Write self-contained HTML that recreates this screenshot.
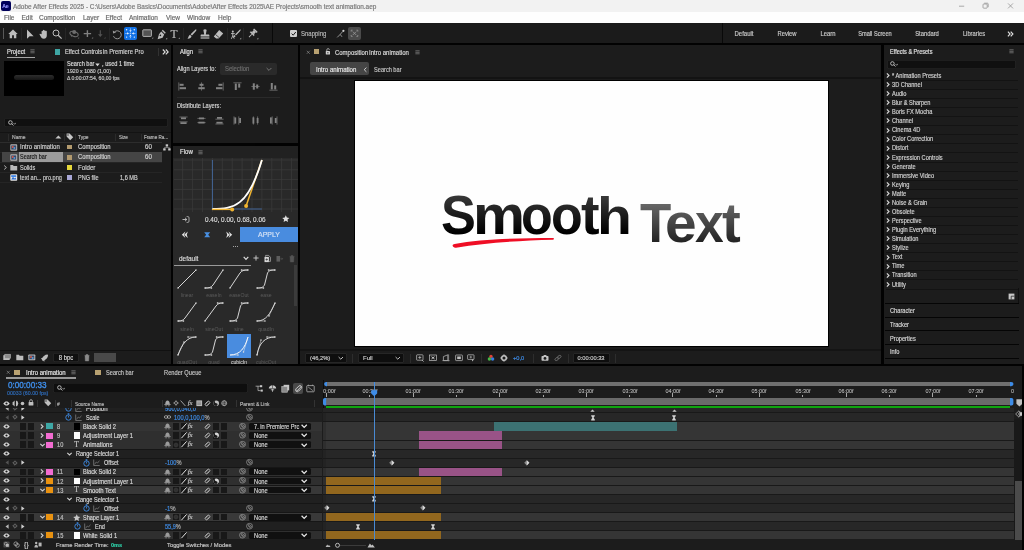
<!DOCTYPE html>
<html><head><meta charset="utf-8"><title>Adobe After Effects 2025</title>
<style>
html,body{margin:0;padding:0;background:#030303;}
body{width:1024px;height:550px;overflow:hidden;position:relative;font-family:"Liberation Sans",sans-serif;}
#app{position:absolute;left:0;top:0;width:1024px;height:550px;overflow:hidden;background:#030303;will-change:transform;opacity:0.9999;}
#app div,#app span,#app svg{position:absolute;}
#app span{white-space:nowrap;line-height:12px;height:12px;-webkit-text-stroke:0.18px currentColor;}
#app svg{overflow:visible;}
</style></head><body><div id="app">
<div style="left:0px;top:0px;width:1024px;height:12px;background:#f3f3f3;"></div>
<div style="left:1px;top:1px;width:10px;height:10px;background:#00005b;border-radius:2px;"></div>
<span style="left:2.2px;top:0.2px;font-size:5.2px;color:#9999ff;font-weight:bold;letter-spacing:-0.2px;">Ae</span>
<span style="left:13px;top:0.5px;font-size:6.45px;color:#7a7a7a;">Adobe After Effects 2025 - C:\Users\Adobe Basics\Documents\Adobe\After Effects 2025\AE Projects\smooth text animation.aep</span>
<svg style="left:956px;top:2px;" width="60" height="8" viewBox="0 0 60 8"><path d="M3 4.2h5.2" stroke="#8a8a8a" stroke-width="0.7" fill="none"/><rect x="27" y="2" width="4.2" height="4.2" rx="0.8" stroke="#8a8a8a" stroke-width="0.7" fill="none"/><path d="M28.2 1.2h3.2a0.8 0.8 0 0 1 .8 .8v3.2" stroke="#8a8a8a" stroke-width="0.7" fill="none"/><path d="M52 1.4l5 5M57 1.4l-5 5" stroke="#8a8a8a" stroke-width="0.7" fill="none"/></svg>
<div style="left:0px;top:12px;width:1024px;height:11px;background:#ffffff;"></div>
<span style="left:4px;top:11.6px;font-size:6.5px;color:#6a6a6a;">File</span>
<span style="left:21.5px;top:11.6px;font-size:6.5px;color:#6a6a6a;">Edit</span>
<span style="left:39px;top:11.6px;font-size:6.5px;color:#6a6a6a;">Composition</span>
<span style="left:83px;top:11.6px;font-size:6.5px;color:#6a6a6a;">Layer</span>
<span style="left:105.5px;top:11.6px;font-size:6.5px;color:#6a6a6a;">Effect</span>
<span style="left:129px;top:11.6px;font-size:6.5px;color:#6a6a6a;">Animation</span>
<span style="left:166px;top:11.6px;font-size:6.5px;color:#6a6a6a;">View</span>
<span style="left:187px;top:11.6px;font-size:6.5px;color:#6a6a6a;">Window</span>
<span style="left:218px;top:11.6px;font-size:6.5px;color:#6a6a6a;">Help</span>
<div style="left:0px;top:23px;width:1024px;height:20.2px;background:#1c1c1c;"></div>
<div style="left:3px;top:28px;width:1px;height:11px;background:#5a5a5a;"></div>
<div style="left:21px;top:27.5px;width:0.8px;height:12px;background:#272727;"></div>
<div style="left:65px;top:27.5px;width:0.8px;height:12px;background:#272727;"></div>
<div style="left:108.5px;top:27.5px;width:0.8px;height:12px;background:#272727;"></div>
<div style="left:182.5px;top:27.5px;width:0.8px;height:12px;background:#272727;"></div>
<div style="left:227px;top:27.5px;width:0.8px;height:12px;background:#272727;"></div>
<div style="left:243px;top:27.5px;width:0.8px;height:12px;background:#272727;"></div>
<div style="left:272px;top:23px;width:1px;height:19.8px;background:#0a0a0a;"></div>
<div style="left:722px;top:23px;width:1px;height:19.8px;background:#0a0a0a;"></div>
<svg style="left:8px;top:29px;" width="10" height="10" viewBox="0 0 10 10"><path d="M5 0.6L0.3 5h1.4v4.2h2.4V6.2h1.8v3h2.4V5h1.4z" fill="#bdbdbd"/></svg>
<svg style="left:26px;top:28.5px;" width="9" height="11" viewBox="0 0 9 11"><path d="M1 0.5v9.2l2.6-2.4h4z" fill="#bdbdbd"/></svg>
<svg style="left:38.5px;top:28.5px;" width="10" height="11" viewBox="0 0 10 11"><path d="M2.6 5.2V2.2a.7.7 0 0 1 1.3 0V1.3a.7.7 0 0 1 1.3 0v.4a.7.7 0 0 1 1.3 0v.8a.65.65 0 0 1 1.3 0V6.6c0 2-1 3.2-3 3.2-1.6 0-2.3-.7-3.1-2.2L.6 5.6c-.3-.7.5-1.1 1-.6z" fill="#bdbdbd"/></svg>
<svg style="left:51.5px;top:28.5px;" width="11" height="11" viewBox="0 0 11 11"><circle cx="4" cy="4" r="3" fill="none" stroke="#bdbdbd" stroke-width="1"/><path d="M6.2 6.2l3.4 3.4" stroke="#bdbdbd" stroke-width="1.3"/></svg>
<svg style="left:68.5px;top:29px;" width="11" height="10" viewBox="0 0 11 10"><circle cx="5.200" cy="2.900" r="2" fill="#6e6e6e"/><ellipse cx="5" cy="5" rx="4.300" ry="2.300" transform="rotate(18 5 5)" fill="none" stroke="#6e6e6e" stroke-width="1.100"/><path d="M1.600 6.600l1.800-.2-.6 1.600z" fill="#6e6e6e"/><path d="M8.600 9.400h1.500v-1.500z" fill="#6e6e6e"/></svg>
<svg style="left:82.5px;top:29px;" width="11" height="10" viewBox="0 0 11 10"><path d="M4.400 1.200v6.800M0.700 4.600h7.400" stroke="#828282" stroke-width="1.400"/><path d="M8.600 9.400h1.500v-1.500z" fill="#828282"/></svg>
<svg style="left:96px;top:29px;" width="10" height="10" viewBox="0 0 10 10"><path d="M4.300 1.200v5" stroke="#555" stroke-width="1.100" fill="none"/><path d="M2 5.200h4.600L4.300 8z" fill="#555"/><path d="M8 9.400h1.500v-1.500z" fill="#555"/></svg>
<svg style="left:112px;top:28.5px;" width="11" height="11" viewBox="0 0 11 11"><path d="M2.600 2.800A4 4 0 1 1 1.500 7.200" stroke="#9a9a9a" stroke-width="1" fill="none"/><path d="M0.800 1.400l0.300 3.200 3-1z" fill="#9a9a9a"/></svg>
<div style="left:124.2px;top:27px;width:12.9px;height:12.7px;background:#1473e6;border-radius:2px;"></div>
<svg style="left:124.2px;top:27px;" width="12.9" height="12.7" viewBox="0 0 12.9 12.7"><g fill="#fff"><circle cx="6.450" cy="6.400" r="0.800" fill="#9cc4f5"/><path d="M5.300 3.200h2.300L6.450 5.100z"/><path d="M5.300 9.600h2.300L6.450 7.700z"/><path d="M3.100 5.250v2.300L5 6.400z"/><path d="M9.800 5.250v2.300L7.900 6.400z"/><circle cx="2.600" cy="2.700" r="0.700"/><circle cx="10.300" cy="2.700" r="0.700"/><circle cx="2.600" cy="10.100" r="0.700"/><circle cx="10.300" cy="10.100" r="0.700"/><circle cx="6.450" cy="2" r="0.500"/><circle cx="6.450" cy="10.800" r="0.500"/><circle cx="2" cy="6.400" r="0.500"/><circle cx="10.900" cy="6.400" r="0.500"/></g></svg>
<svg style="left:142px;top:29px;" width="12" height="10" viewBox="0 0 12 10"><rect x="0.8" y="0.8" width="8.6" height="6.6" rx="0.6" fill="#555" stroke="#bdbdbd" stroke-width="0.9"/><path d="M9.8 9.6h1.4v-1.4z" fill="#bdbdbd"/></svg>
<svg style="left:155.5px;top:28.5px;" width="12" height="11" viewBox="0 0 12 11"><path d="M6.8 0.8l3 3-1 1-3-3zM5.2 2.6l3 3-1.6 3.2-5 1.4 1.4-5z" fill="#bdbdbd"/><circle cx="4.4" cy="6.4" r="0.8" fill="#1b1b1b"/><path d="M9.8 10.2h1.4v-1.4z" fill="#bdbdbd"/></svg>
<span style="left:170.5px;top:27.6px;font-size:11.5px;color:#bdbdbd;font-family:Liberation Serif,serif;">T</span>
<svg style="left:178px;top:37px;" width="2" height="2" viewBox="0 0 2 2"><path d="M0.4 1.8h1.4v-1.4z" fill="#bdbdbd"/></svg>
<svg style="left:186.5px;top:28.5px;" width="10" height="11" viewBox="0 0 10 11"><path d="M9.2 0.4c.4.4 .2 1-.2 1.5L5 6.6 3.6 5.2 8 1c.4-.4.9-.8 1.2-.6z" fill="#bdbdbd"/><path d="M3 5.8l1.5 1.5c-.3 1.6-2 2.6-4 2.4C1.6 8.600 1.500 6.400 3 5.8z" fill="#bdbdbd"/></svg>
<svg style="left:199.5px;top:28.5px;" width="10" height="11" viewBox="0 0 10 11"><path d="M3.600 2.200a1.500 1.500 0 1 1 2.800 0L5.800 5.400h2.600c.6 0 1 .4 1 1v1.200H.6V6.400c0-.6.4-1 1-1h2.600z" fill="#bdbdbd"/><rect x="0.6" y="8.4" width="8.8" height="1.2" fill="#bdbdbd"/></svg>
<svg style="left:213px;top:28.5px;" width="11" height="11" viewBox="0 0 11 11"><path d="M6.200 1l4 3.400-4.600 5.200H3.200L.8 7.400z" fill="#bdbdbd"/><path d="M2.600 5.600l3.600 3" stroke="#1b1b1b" stroke-width="0.7"/></svg>
<svg style="left:230px;top:28.5px;" width="12" height="11" viewBox="0 0 12 11"><circle cx="2.800" cy="2.400" r="1" fill="#bdbdbd"/><path d="M1 4.600h3.800M2.800 3.600v3.200M2.800 6.600L1.400 9.800M2.800 6.600l1.400 3" stroke="#bdbdbd" stroke-width="0.9" fill="none"/><path d="M10.600 0.600c.4.400-.2 1.200-.6 1.600L6.200 6.200 5 5.400 9 1.400c.6-.6 1.200-1 1.600-.8zM4.600 6l1 1c-.4 1-1.400 1.600-2.600 1.400.8-.6.600-1.800 1.600-2.400z" fill="#bdbdbd"/><path d="M9.800 10.200h1.400v-1.400z" fill="#bdbdbd"/></svg>
<svg style="left:246.5px;top:28.5px;" width="12" height="11" viewBox="0 0 12 11"><g transform="rotate(45 5.200 4.800)" fill="#bdbdbd"><rect x="2.700" y="-0.400" width="5" height="1.500" rx="0.400"/><rect x="3.700" y="1" width="3" height="2.600"/><path d="M2.200 5.400c0-1.200 1-2 3-2s3 .8 3 2z"/><rect x="4.800" y="5.400" width="0.900" height="4" /></g><path d="M9.800 10.200h1.500v-1.500z" fill="#bdbdbd"/></svg>
<div style="left:289.8px;top:30.2px;width:7.2px;height:7px;background:#d0d0d0;border-radius:1px;"></div>
<svg style="left:289.8px;top:30.2px;" width="7.2" height="7" viewBox="0 0 7.2 7"><path d="M1.600 3.600l1.600 1.600 2.600-3.200" stroke="#1b1b1b" stroke-width="1" fill="none"/></svg>
<span style="left:301px;top:28.3px;font-size:6.93px;color:#b8b8b8;transform:scaleX(0.8645);transform-origin:0 50%;">Snapping</span>
<svg style="left:335.5px;top:29px;" width="10" height="10" viewBox="0 0 10 10"><path d="M1.200 8.400l3-3 1.800 2.400M4.200 5.400l2.600-3" stroke="#b0b0b0" stroke-width="0.8" fill="none"/><circle cx="7.400" cy="1.800" r="1.100" fill="#d0d0d0"/></svg>
<div style="left:347.5px;top:27.2px;width:13px;height:12.6px;background:#4b4b4b;border-radius:2px;"></div>
<svg style="left:347.5px;top:27.2px;" width="13" height="12.6" viewBox="0 0 13 12.6"><g stroke="#9a9a9a" stroke-width="0.8" fill="none"><path d="M3.200 4.600V3.200h1.400M8.400 3.200h1.400v1.400M9.800 8v1.400H8.400M4.600 9.400H3.200V8"/><path d="M4.800 4.600l3.400 3.400M8.200 4.600L4.800 8"/></g></svg>
<span style="left:644.3px;width:200px;text-align:center;top:28.2px;font-size:6.4px;color:#c8c8c8;transform:scaleX(0.9383);">Default</span>
<span style="left:687px;width:200px;text-align:center;top:28.2px;font-size:6.4px;color:#c8c8c8;transform:scaleX(0.9061);">Review</span>
<span style="left:727.5px;width:200px;text-align:center;top:28.2px;font-size:6.4px;color:#c8c8c8;transform:scaleX(0.9108);">Learn</span>
<span style="left:775.3px;width:200px;text-align:center;top:28.2px;font-size:6.4px;color:#c8c8c8;transform:scaleX(0.8812);">Small Screen</span>
<span style="left:827.3px;width:200px;text-align:center;top:28.2px;font-size:6.4px;color:#c8c8c8;transform:scaleX(0.9137);">Standard</span>
<span style="left:873.7px;width:200px;text-align:center;top:28.2px;font-size:6.4px;color:#c8c8c8;transform:scaleX(0.9055);">Libraries</span>
<svg style="left:1006.6px;top:30.8px;" width="7" height="6" viewBox="0 0 7 6"><path d="M0.900 0.700l2.200 2.300L0.900 5.300M3.700 0.700l2.200 2.300-2.200 2.300" stroke="#e0e0e0" stroke-width="1.150" fill="none"/></svg>
<div style="left:0px;top:44.6px;width:171.3px;height:319.2px;background:#1d1d1d;"></div>
<span style="left:7px;top:45.9px;font-size:7.26px;color:#e4e4e4;transform:scaleX(0.8061);transform-origin:0 50%;">Project</span>
<svg style="left:30px;top:49.4px;" width="5" height="5" viewBox="0 0 5 5"><path d="M0.400 0.800h4.200M0.400 2.300h4.200M0.400 3.800h4.200" stroke="#8a8a8a" stroke-width="0.7"/></svg>
<div style="left:6.5px;top:56.7px;width:28.5px;height:1.1px;background:#a8a8a8;"></div>
<div style="left:54.5px;top:48.8px;width:5.6px;height:5.8px;background:#3fa7a5;"></div>
<span style="left:65px;top:46.3px;font-size:6.93px;color:#d4d4d4;transform:scaleX(0.8215);transform-origin:0 50%;">Effect Controls</span>
<span style="left:103.2px;top:46.3px;font-size:6.93px;color:#d4d4d4;transform:scaleX(0.8463);transform-origin:0 50%;">in Premiere Pro</span>
<div style="left:158px;top:48px;width:0.8px;height:8px;background:#333;"></div>
<svg style="left:162px;top:48.7px;" width="7" height="6" viewBox="0 0 7 6"><path d="M0.800 0.500l2.300 2.400L0.800 5.300M3.800 0.500l2.300 2.400-2.300 2.400" stroke="#dcdcdc" stroke-width="1.200" fill="none"/></svg>
<div style="left:3.8px;top:61px;width:60.7px;height:34.7px;background:#000;"></div>
<div style="left:13.5px;top:74.6px;width:40.7px;height:5.6px;background:linear-gradient(#2e2e2e,#161616);border-radius:3px;"></div>
<span style="left:67.4px;top:58.3px;font-size:6.93px;color:#dcdcdc;transform:scaleX(0.8092);transform-origin:0 50%;">Search bar</span>
<svg style="left:95.4px;top:62.5px;" width="5" height="4" viewBox="0 0 5 4"><path d="M0.300 0.600h4.400L2.500 3.200z" fill="#dcdcdc"/></svg>
<span style="left:101.7px;top:58.3px;font-size:6.93px;color:#dcdcdc;transform:scaleX(0.8199);transform-origin:0 50%;">, used 1 time</span>
<span style="left:67.4px;top:64.9px;font-size:5.6px;color:#c8c8c8;transform:scaleX(0.9347);transform-origin:0 50%;">1920 x 1080 (1,00)</span>
<span style="left:67.4px;top:71.8px;font-size:5.6px;color:#c8c8c8;transform:scaleX(0.914);transform-origin:0 50%;">&#916; 0:00:07:54, 60,00 fps</span>
<div style="left:4.4px;top:117.6px;width:163.2px;height:9.4px;background:#111111;border-radius:2px;box-shadow:inset 0 0 0 0.600px #2e2e2e;"></div>
<svg style="left:7.5px;top:119.5px;" width="10" height="6" viewBox="0 0 10 6"><circle cx="2.400" cy="2.500" r="1.800" fill="none" stroke="#cfcfcf" stroke-width="0.850"/><path d="M3.700 3.800l1.700 1.700" stroke="#cfcfcf" stroke-width="0.900"/><path d="M5.600 3.100l1.100 1.100 1.100-1.100" stroke="#cfcfcf" stroke-width="0.750" fill="none"/></svg>
<div style="left:0px;top:131.8px;width:171.4px;height:0.7px;background:#141414;"></div>
<span style="left:12px;top:131px;font-size:5.5px;color:#b8b8b8;transform:scaleX(0.9201);transform-origin:0 50%;">Name</span>
<svg style="left:55px;top:134.8px;" width="7" height="4" viewBox="0 0 7 4"><path d="M0.400 3.600L3.400 0.400l3 3.200z" fill="#c4c4c4"/></svg>
<svg style="left:66px;top:133.2px;" width="8" height="8" viewBox="0 0 8 8"><path d="M0.600 0.600h3l3.600 3.600-3 3L0.600 3.600z" fill="#c8c8c8"/><circle cx="2" cy="2" r="0.700" fill="#1d1d1d"/></svg>
<span style="left:78.2px;top:131px;font-size:5.5px;color:#b8b8b8;transform:scaleX(0.888);transform-origin:0 50%;">Type</span>
<span style="left:118.7px;top:131px;font-size:5.5px;color:#b8b8b8;transform:scaleX(0.8222);transform-origin:0 50%;">Size</span>
<span style="left:144.2px;top:131px;font-size:5.5px;color:#b8b8b8;transform:scaleX(0.8331);transform-origin:0 50%;">Frame Ra...</span>
<div style="left:7.5px;top:133.5px;width:0.6px;height:7px;background:#2c2c2c;"></div>
<div style="left:64px;top:133.5px;width:0.6px;height:7px;background:#2c2c2c;"></div>
<div style="left:75px;top:133.5px;width:0.6px;height:7px;background:#2c2c2c;"></div>
<div style="left:115px;top:133.5px;width:0.6px;height:7px;background:#2c2c2c;"></div>
<div style="left:141px;top:133.5px;width:0.6px;height:7px;background:#2c2c2c;"></div>
<div style="left:0px;top:141.8px;width:162px;height:0.6px;background:#2e2e2e;"></div>
<div style="left:0px;top:152px;width:162px;height:0.5px;background:#262626;"></div>
<span style="left:20px;top:141.3px;font-size:6.82px;color:#d0d0d0;transform:scaleX(0.8829);transform-origin:0 50%;">Intro animation</span>
<div style="left:66.8px;top:144.6px;width:4.8px;height:4.8px;background:#b39b6f;"></div>
<span style="left:78.4px;top:141.3px;font-size:6.82px;color:#d4d4d4;transform:scaleX(0.8607);transform-origin:0 50%;">Composition</span>
<span style="left:144.8px;top:141.3px;font-size:6.82px;color:#d4d4d4;transform:scaleX(0.9105);transform-origin:0 50%;">60</span>
<div style="left:1.5px;top:152.25px;width:160.5px;height:9.8px;background:#464646;"></div>
<div style="left:19px;top:152.25px;width:43.7px;height:9.8px;background:#9d9d9d;"></div>
<div style="left:0px;top:162.15px;width:162px;height:0.5px;background:#262626;"></div>
<span style="left:20px;top:151.45px;font-size:6.82px;color:#1a1a1a;transform:scaleX(0.8011);transform-origin:0 50%;">Search bar</span>
<div style="left:66.8px;top:154.75px;width:4.8px;height:4.8px;background:#b39b6f;"></div>
<span style="left:78.4px;top:151.45px;font-size:6.82px;color:#d4d4d4;transform:scaleX(0.8607);transform-origin:0 50%;">Composition</span>
<span style="left:144.8px;top:151.45px;font-size:6.82px;color:#d4d4d4;transform:scaleX(0.9105);transform-origin:0 50%;">60</span>
<div style="left:0px;top:172.2px;width:162px;height:0.5px;background:#262626;"></div>
<span style="left:20px;top:161.5px;font-size:6.82px;color:#d0d0d0;transform:scaleX(0.8189);transform-origin:0 50%;">Solids</span>
<div style="left:66.8px;top:164.8px;width:4.8px;height:4.8px;background:#e6d83b;"></div>
<span style="left:78.4px;top:161.5px;font-size:6.82px;color:#d4d4d4;transform:scaleX(0.901);transform-origin:0 50%;">Folder</span>
<div style="left:0px;top:182.2px;width:162px;height:0.5px;background:#262626;"></div>
<span style="left:20px;top:171.5px;font-size:6.82px;color:#d0d0d0;transform:scaleX(0.8193);transform-origin:0 50%;">text an... pro.png</span>
<div style="left:66.8px;top:174.8px;width:4.8px;height:4.8px;background:#a9a8d8;"></div>
<span style="left:78.4px;top:171.5px;font-size:6.82px;color:#d4d4d4;transform:scaleX(0.8158);transform-origin:0 50%;">PNG file</span>
<span style="left:119.6px;top:171.5px;font-size:6.82px;color:#d4d4d4;transform:scaleX(0.8197);transform-origin:0 50%;">1,6 MB</span>
<svg style="left:10px;top:143.5px;" width="7.5" height="7" viewBox="0 0 7.5 7"><rect x="0.300" y="0.300" width="6.900" height="6.400" rx="0.800" fill="#b5b5b5"/><rect x="1.200" y="1.400" width="5" height="4.200" fill="#3b4a66"/><circle cx="2.800" cy="3" r="1" fill="#d85a4a"/><circle cx="4.400" cy="4" r="1" fill="#5a9ad8"/></svg>
<svg style="left:10px;top:153.65px;" width="7.5" height="7" viewBox="0 0 7.5 7"><rect x="0.300" y="0.300" width="6.900" height="6.400" rx="0.800" fill="#b5b5b5"/><rect x="1.200" y="1.400" width="5" height="4.200" fill="#3b4a66"/><circle cx="2.800" cy="3" r="1" fill="#d85a4a"/><circle cx="4.400" cy="4" r="1" fill="#5a9ad8"/></svg>
<svg style="left:2.5px;top:164.7px;" width="5" height="5" viewBox="0 0 5 5"><path d="M1.200 0.500l2.200 2-2.200 2" stroke="#c0c0c0" stroke-width="0.900" fill="none"/></svg>
<svg style="left:10px;top:163.7px;" width="7.5" height="7" viewBox="0 0 7.5 7"><path d="M0.300 1h2.600l.8.900h3.500v4.600H.3z" fill="#b9b9b9"/></svg>
<svg style="left:10px;top:173.7px;" width="7.5" height="7" viewBox="0 0 7.5 7"><rect x="0.300" y="0.300" width="6.900" height="6.400" rx="0.800" fill="#e8e8e8"/><path d="M1.200 5.400l1.800-2.600 1.400 1.600 1-1 1 2z" fill="#2f6fd0"/><rect x="1.200" y="1.200" width="5" height="1.800" fill="#3f86e8"/></svg>
<svg style="left:162.5px;top:143.5px;" width="8" height="7" viewBox="0 0 8 7"><g fill="#c8c8c8"><rect x="2.700" y="0.300" width="2.400" height="2.200"/><rect x="0.200" y="4.300" width="2.400" height="2.200"/><rect x="5.200" y="4.300" width="2.400" height="2.200"/><path d="M3.900 2.400v1.200M1.400 4.400V3.600h5v.8" stroke="#c8c8c8" stroke-width="0.500" fill="none"/></g></svg>
<div style="left:0px;top:350.2px;width:171.4px;height:0.7px;background:#121212;"></div>
<svg style="left:2.5px;top:354px;" width="8" height="7" viewBox="0 0 8 7"><rect x="0.300" y="1.200" width="6.400" height="4.800" fill="#bdbdbd"/><rect x="1.800" y="0.200" width="5.800" height="4.200" fill="#8a8a8a" stroke="#bdbdbd" stroke-width="0.500"/></svg>
<svg style="left:15.5px;top:354px;" width="8" height="7" viewBox="0 0 8 7"><path d="M0.300 0.800h2.600l.8.900h3.600v4.500H.3z" fill="#bdbdbd"/></svg>
<svg style="left:28px;top:354px;" width="8" height="7" viewBox="0 0 8 7"><rect x="0.300" y="0.500" width="7" height="5.800" rx="0.800" fill="#bdbdbd"/><rect x="1.300" y="1.500" width="5" height="3.800" fill="#3b4a66"/><circle cx="3" cy="3" r="1" fill="#d85a4a"/><circle cx="4.600" cy="3.900" r="1" fill="#5a9ad8"/></svg>
<svg style="left:40px;top:353.5px;" width="8" height="8" viewBox="0 0 8 8"><path d="M7.400 0.400C5 0.600 3.200 2 2.200 4L0.800 4.200l1 1 .3 1.200 1.200.3 1 1 .2-1.400c2-1 3.400-2.800 3.600-5.200z" fill="#bdbdbd"/></svg>
<div style="left:52.5px;top:352.7px;width:26.3px;height:9.2px;background:#111;border-radius:2px;box-shadow:inset 0 0 0 0.600px #333;"></div>
<span style="left:-34.1px;width:200px;text-align:center;top:351.7px;font-size:6.6px;color:#d8d8d8;transform:scaleX(0.8984);">8 bpc</span>
<svg style="left:83.5px;top:353.7px;" width="6" height="7.5" viewBox="0 0 6 7.5"><path d="M0.400 1.400h5.200M2 1.400V0.500h2v.9M1 1.600l.3 5.400h3.400l.3-5.400z" fill="#8a8a8a" stroke="#8a8a8a" stroke-width="0.400"/></svg>
<div style="left:94.3px;top:352.8px;width:22px;height:9.2px;background:#4a4a4a;"></div>
<div style="left:173.3px;top:44.6px;width:124.8px;height:98.2px;background:#1d1d1d;"></div>
<span style="left:179.7px;top:45.9px;font-size:7.26px;color:#e4e4e4;transform:scaleX(0.8062);transform-origin:0 50%;">Align</span>
<svg style="left:198.3px;top:49.4px;" width="5" height="5" viewBox="0 0 5 5"><path d="M0.400 0.800h4.200M0.400 2.300h4.200M0.400 3.800h4.200" stroke="#8a8a8a" stroke-width="0.700"/></svg>
<span style="left:176.9px;top:63.1px;font-size:6.82px;color:#d8d8d8;transform:scaleX(0.8303);transform-origin:0 50%;">Align Layers to:</span>
<div style="left:220.3px;top:62.5px;width:56.5px;height:12.3px;background:#2b2b2b;border-radius:2px;"></div>
<span style="left:224.7px;top:63.1px;font-size:6.82px;color:#6e6e6e;transform:scaleX(0.8669);transform-origin:0 50%;">Selection</span>
<svg style="left:266.4px;top:66.6px;" width="6" height="5" viewBox="0 0 6 5"><path d="M0.600 1l2.400 2.400L5.400 1" stroke="#8c8c8c" stroke-width="0.800" fill="none"/></svg>
<svg style="left:178.1px;top:81.5px;" width="9" height="9" viewBox="0 0 9 9"><path d="M0.800 0.400v8.200" stroke="#848484" stroke-width="0.700"/><rect x="1.600" y="1.800" width="4" height="2" fill="#848484"/><rect x="1.600" y="5.200" width="6.400" height="2" fill="#848484"/></svg>
<svg style="left:196.6px;top:81.5px;" width="9" height="9" viewBox="0 0 9 9"><path d="M4.500 0.400v8.200" stroke="#848484" stroke-width="0.700"/><rect x="2.500" y="1.800" width="4" height="2" fill="#848484"/><rect x="1.300" y="5.200" width="6.400" height="2" fill="#848484"/></svg>
<svg style="left:215.0px;top:81.5px;" width="9" height="9" viewBox="0 0 9 9"><path d="M8.200 0.400v8.200" stroke="#848484" stroke-width="0.700"/><rect x="3.400" y="1.800" width="4" height="2" fill="#848484"/><rect x="1" y="5.200" width="6.400" height="2" fill="#848484"/></svg>
<svg style="left:233.0px;top:81.5px;" width="9" height="9" viewBox="0 0 9 9"><path d="M0.400 0.800h8.200" stroke="#848484" stroke-width="0.700"/><rect x="1.800" y="1.600" width="2" height="6.400" fill="#848484"/><rect x="5.200" y="1.600" width="2" height="4" fill="#848484"/></svg>
<svg style="left:251.0px;top:81.5px;" width="9" height="9" viewBox="0 0 9 9"><path d="M0.400 4.500h8.200" stroke="#848484" stroke-width="0.700"/><rect x="1.800" y="1.300" width="2" height="6.400" fill="#848484"/><rect x="5.200" y="2.500" width="2" height="4" fill="#848484"/></svg>
<svg style="left:269.0px;top:81.5px;" width="9" height="9" viewBox="0 0 9 9"><path d="M0.400 8.200h8.200" stroke="#848484" stroke-width="0.700"/><rect x="1.800" y="1" width="2" height="6.400" fill="#848484"/><rect x="5.200" y="3.400" width="2" height="4" fill="#848484"/></svg>
<div style="left:176.5px;top:96.6px;width:103.5px;height:0.7px;background:#2b2b2b;"></div>
<span style="left:176.9px;top:100.4px;font-size:6.82px;color:#d8d8d8;transform:scaleX(0.8299);transform-origin:0 50%;">Distribute Layers:</span>
<svg style="left:178.5px;top:115.8px;" width="9" height="9" viewBox="0 0 9 9"><path d="M0.400 1h8.200M0.400 5.800h8.200" stroke="#848484" stroke-width="0.700"/><rect x="2" y="1.400" width="5" height="1.800" fill="#848484"/><rect x="1.400" y="6.200" width="6.200" height="1.800" fill="#848484"/></svg>
<svg style="left:196.6px;top:115.8px;" width="9" height="9" viewBox="0 0 9 9"><path d="M0.400 2.400h8.200M0.400 6.600h8.200" stroke="#848484" stroke-width="0.700"/><rect x="2" y="1.500" width="5" height="1.800" fill="#848484"/><rect x="1.400" y="5.700" width="6.200" height="1.800" fill="#848484"/></svg>
<svg style="left:215.0px;top:115.8px;" width="9" height="9" viewBox="0 0 9 9"><path d="M0.400 3.200h8.200M0.400 8h8.200" stroke="#848484" stroke-width="0.700"/><rect x="2" y="1" width="5" height="1.800" fill="#848484"/><rect x="1.400" y="5.800" width="6.200" height="1.800" fill="#848484"/></svg>
<svg style="left:232.7px;top:115.8px;" width="9" height="9" viewBox="0 0 9 9"><path d="M1 0.400v8.200M5.800 0.400v8.200" stroke="#848484" stroke-width="0.700"/><rect x="1.400" y="1.400" width="1.800" height="6.200" fill="#848484"/><rect x="6.200" y="2" width="1.800" height="5" fill="#848484"/></svg>
<svg style="left:251.0px;top:115.8px;" width="9" height="9" viewBox="0 0 9 9"><path d="M2.400 0.400v8.200M6.600 0.400v8.200" stroke="#848484" stroke-width="0.700"/><rect x="1.500" y="1.400" width="1.800" height="6.200" fill="#848484"/><rect x="5.700" y="2" width="1.800" height="5" fill="#848484"/></svg>
<svg style="left:269.0px;top:115.8px;" width="9" height="9" viewBox="0 0 9 9"><path d="M3.200 0.400v8.200M8 0.400v8.200" stroke="#848484" stroke-width="0.700"/><rect x="1" y="1.400" width="1.800" height="6.200" fill="#848484"/><rect x="5.800" y="2" width="1.800" height="5" fill="#848484"/></svg>
<div style="left:173.3px;top:145.6px;width:124.8px;height:218.2px;background:#2a2a2a;"></div>
<div style="left:173.3px;top:145.6px;width:124.8px;height:12.8px;background:#222222;"></div>
<span style="left:179.6px;top:146.1px;font-size:7.26px;color:#e4e4e4;transform:scaleX(0.8359);transform-origin:0 50%;">Flow</span>
<svg style="left:197.5px;top:149.6px;" width="5" height="5" viewBox="0 0 5 5"><path d="M0.400 0.800h4.200M0.400 2.300h4.200M0.400 3.800h4.200" stroke="#8a8a8a" stroke-width="0.700"/></svg>
<svg style="left:173.5px;top:158.4px;overflow:hidden;" width="124.5" height="54" viewBox="0 0 124.5 54"><path d="M8.7 0V54" stroke="#3b3b3b" stroke-width="0.800"/><path d="M18.6 0V54" stroke="#3b3b3b" stroke-width="0.800"/><path d="M28.5 0V54" stroke="#3b3b3b" stroke-width="0.800"/><path d="M38.4 0V54" stroke="#3b3b3b" stroke-width="0.800"/><path d="M48.3 0V54" stroke="#3b3b3b" stroke-width="0.800"/><path d="M58.2 0V54" stroke="#3b3b3b" stroke-width="0.800"/><path d="M68.1 0V54" stroke="#3b3b3b" stroke-width="0.800"/><path d="M78.0 0V54" stroke="#3b3b3b" stroke-width="0.800"/><path d="M87.9 0V54" stroke="#3b3b3b" stroke-width="0.800"/><path d="M97.8 0V54" stroke="#3b3b3b" stroke-width="0.800"/><path d="M107.7 0V54" stroke="#3b3b3b" stroke-width="0.800"/><path d="M117.6 0V54" stroke="#3b3b3b" stroke-width="0.800"/><path d="M0 2.0H124.5" stroke="#3b3b3b" stroke-width="0.800"/><path d="M0 11.8H124.5" stroke="#3b3b3b" stroke-width="0.800"/><path d="M0 21.6H124.5" stroke="#3b3b3b" stroke-width="0.800"/><path d="M0 31.4H124.5" stroke="#3b3b3b" stroke-width="0.800"/><path d="M0 41.2H124.5" stroke="#3b3b3b" stroke-width="0.800"/><path d="M0 51.0H124.5" stroke="#3b3b3b" stroke-width="0.800"/><path d="M38.400000000000006 2V51H87.9" stroke="#4a7cc4" stroke-width="0.700" fill="none"/><path d="M72.1 47.9L87.9 2" stroke="#f2b632" stroke-width="1.500"/><path d="M38.400000000000006 51C59.2 51 74.0 49.0 87.9 2" stroke="#ffffff" stroke-width="1.800" fill="none"/><path d="M37.900000000000006 51.4L58.2 51.4" stroke="#f2b632" stroke-width="1.400"/><circle cx="58.2" cy="51.6" r="2" fill="#f2b632"/><circle cx="72.1" cy="47.9" r="2" fill="#f2b632"/></svg>
<svg style="left:181.5px;top:215.7px;" width="8" height="7" viewBox="0 0 8 7"><path d="M0.500 3.500h4M3 1.800l1.800 1.700L3 5.200" stroke="#d8d8d8" stroke-width="0.800" fill="none"/><path d="M4.600 0.600h1.200a1.200 1.200 0 0 1 1.200 1.200v3.400a1.200 1.200 0 0 1-1.200 1.200H4.600" stroke="#d8d8d8" stroke-width="0.700" fill="none"/></svg>
<span style="left:205px;top:213.8px;font-size:6.93px;color:#d8d8d8;transform:scaleX(0.9261);transform-origin:0 50%;">0.40, 0.00, 0.68, 0.06</span>
<svg style="left:282px;top:215.4px;" width="8" height="8" viewBox="0 0 8 8"><path d="M3.800 0.300l1.050 2.300 2.500.280-1.850 1.720.5 2.480L3.800 5.850 1.600 7.080l.5-2.480L.25 2.880l2.500-.280z" fill="#e0e0e0"/></svg>
<svg style="left:181px;top:230.8px;" width="8" height="7.5" viewBox="0 0 8 7.5"><path d="M6.800 0.500L3.200 3.700l3.600 3.200-1-3.200z" fill="#e0e0e0"/><path d="M4.400 0.500L0.800 3.700l3.600 3.200-1.300-3.200z" fill="#e0e0e0"/></svg>
<svg style="left:203.8px;top:231.8px;" width="6.4" height="5.4" viewBox="0 0 6.4 5.4"><path d="M0.200 0.200h6L4.200 2.700l2 2.500H0.200l2-2.500z" fill="#4a90e2"/></svg>
<svg style="left:224.6px;top:230.8px;" width="8" height="7.5" viewBox="0 0 8 7.5"><path d="M1.200 0.500l3.600 3.200-3.600 3.200 1-3.200z" fill="#e0e0e0"/><path d="M3.600 0.500l3.600 3.200-3.600 3.200 1.300-3.200z" fill="#e0e0e0"/></svg>
<div style="left:240px;top:226.6px;width:58px;height:15.2px;background:#4a8de0;"></div>
<span style="left:169px;width:200px;text-align:center;top:228.5px;font-size:7.6px;color:#d4e2f6;transform:scaleX(0.9197);">APPLY</span>
<div style="left:233.2px;top:246px;width:1.3px;height:1.3px;background:#d0d0d0;border-radius:1px;"></div>
<div style="left:235.2px;top:246px;width:1.3px;height:1.3px;background:#d0d0d0;border-radius:1px;"></div>
<div style="left:237.2px;top:246px;width:1.3px;height:1.3px;background:#d0d0d0;border-radius:1px;"></div>
<span style="left:178.8px;top:252.5px;font-size:7.26px;color:#dcdcdc;transform:scaleX(0.8907);transform-origin:0 50%;">default</span>
<svg style="left:242.5px;top:256.2px;" width="6" height="5" viewBox="0 0 6 5"><path d="M0.700 0.900l2.300 2.400L5.300 0.900" stroke="#e0e0e0" stroke-width="1.200" fill="none"/></svg>
<svg style="left:253px;top:255.4px;" width="6" height="6" viewBox="0 0 6 6"><path d="M3 0.400v5.200M0.400 3h5.200" stroke="#d0d0d0" stroke-width="0.900"/></svg>
<svg style="left:264.3px;top:254.8px;" width="7" height="7.5" viewBox="0 0 7 7.5"><path d="M1.600 1.800V0.400h3l1.800 1.800v4.200H5" stroke="#d8d8d8" stroke-width="0.600" fill="none"/><rect x="0.500" y="1.900" width="4.400" height="5.200" fill="#d8d8d8"/><path d="M1.500 4.500h2.400M2.700 3.300v2.400" stroke="#2a2a2a" stroke-width="0.600"/></svg>
<svg style="left:276.3px;top:254.8px;" width="7" height="7.5" viewBox="0 0 7 7.5"><rect x="0.500" y="1" width="3.600" height="5.600" fill="#5e5e5e"/><path d="M4.400 3.800h2.200M5.600 2.800l1 1-1 1" stroke="#5e5e5e" stroke-width="0.600" fill="none"/></svg>
<svg style="left:289px;top:254.8px;" width="6" height="7.5" viewBox="0 0 6 7.5"><path d="M0.400 1.400h5.200M2 1.400V0.500h2v.9M1 1.600l.3 5.400h3.400l.3-5.400z" fill="#555" stroke="#555" stroke-width="0.400"/></svg>
<div style="left:173.5px;top:265.2px;width:77.4px;height:0.8px;background:#9a9a9a;"></div>
<div style="left:294.4px;top:265.4px;width:2.3px;height:40.6px;background:#3c3c3c;"></div>
<svg style="left:176.9px;top:268.8px;" width="20" height="20" viewBox="0 0 20 20"><path d="M1 19L19 1" stroke="#e2e2e2" stroke-width="0.95" fill="none"/><circle cx="1" cy="19" r="0.750" fill="#e2e2e2"/><circle cx="19" cy="1" r="0.750" fill="#e2e2e2"/></svg>
<span style="left:86.9px;width:200px;text-align:center;top:289.1px;font-size:5.4px;color:#5c5c5c;transform:scaleX(0.95);-webkit-text-stroke:0;">linear</span>
<svg style="left:203.5px;top:268.8px;" width="20" height="20" viewBox="0 0 20 20"><path d="M1 19C5.5 19 7.0 18.500 9.0 16L19 1" stroke="#e2e2e2" stroke-width="0.95" fill="none"/><path d="M1 19H7.5" stroke="#e2e2e2" stroke-width="0.6" fill="none"/><circle cx="1" cy="19" r="0.750" fill="#e2e2e2"/><circle cx="7.5" cy="19" r="0.750" fill="#e2e2e2"/><circle cx="19" cy="1" r="0.750" fill="#e2e2e2"/></svg>
<span style="left:113.5px;width:200px;text-align:center;top:289.1px;font-size:5.4px;color:#5c5c5c;transform:scaleX(0.95);-webkit-text-stroke:0;">easeIn</span>
<svg style="left:229px;top:268.8px;" width="20" height="20" viewBox="0 0 20 20"><path d="M1 19L11.0 4C13.0 1.500 14.5 1 19 1" stroke="#e2e2e2" stroke-width="0.95" fill="none"/><path d="M12.5 1H19" stroke="#e2e2e2" stroke-width="0.6" fill="none"/><circle cx="1" cy="19" r="0.750" fill="#e2e2e2"/><circle cx="12.5" cy="1" r="0.750" fill="#e2e2e2"/><circle cx="19" cy="1" r="0.750" fill="#e2e2e2"/></svg>
<span style="left:139px;width:200px;text-align:center;top:289.1px;font-size:5.4px;color:#5c5c5c;transform:scaleX(0.95);-webkit-text-stroke:0;">easeOut</span>
<svg style="left:255.5px;top:268.8px;" width="20" height="20" viewBox="0 0 20 20"><path d="M1 19C5.500 19 7 18.500 8.500 16L11.500 4C13 1.500 14.500 1 19 1" stroke="#e2e2e2" stroke-width="0.95" fill="none"/><path d="M1 19H7.500M12.500 1H19" stroke="#e2e2e2" stroke-width="0.6" fill="none"/><circle cx="1" cy="19" r="0.750" fill="#e2e2e2"/><circle cx="7.5" cy="19" r="0.750" fill="#e2e2e2"/><circle cx="12.5" cy="1" r="0.750" fill="#e2e2e2"/><circle cx="19" cy="1" r="0.750" fill="#e2e2e2"/></svg>
<span style="left:165.5px;width:200px;text-align:center;top:289.1px;font-size:5.4px;color:#5c5c5c;transform:scaleX(0.95);-webkit-text-stroke:0;">ease</span>
<svg style="left:176.9px;top:302.1px;" width="20" height="20" viewBox="0 0 20 20"><path d="M1 19C4.5 19 6.0 18.500 8.0 16L19 1" stroke="#e2e2e2" stroke-width="0.95" fill="none"/><path d="M1 19H6.5" stroke="#e2e2e2" stroke-width="0.6" fill="none"/><circle cx="1" cy="19" r="0.750" fill="#e2e2e2"/><circle cx="6.5" cy="19" r="0.750" fill="#e2e2e2"/><circle cx="19" cy="1" r="0.750" fill="#e2e2e2"/></svg>
<span style="left:86.9px;width:200px;text-align:center;top:322.7px;font-size:5.4px;color:#5c5c5c;transform:scaleX(0.95);-webkit-text-stroke:0;">sineIn</span>
<svg style="left:203.5px;top:302.1px;" width="20" height="20" viewBox="0 0 20 20"><path d="M1 19L12.0 4C14.0 1.500 15.5 1 19 1" stroke="#e2e2e2" stroke-width="0.95" fill="none"/><path d="M13.5 1H19" stroke="#e2e2e2" stroke-width="0.6" fill="none"/><circle cx="1" cy="19" r="0.750" fill="#e2e2e2"/><circle cx="13.5" cy="1" r="0.750" fill="#e2e2e2"/><circle cx="19" cy="1" r="0.750" fill="#e2e2e2"/></svg>
<span style="left:113.5px;width:200px;text-align:center;top:322.7px;font-size:5.4px;color:#5c5c5c;transform:scaleX(0.95);-webkit-text-stroke:0;">sineOut</span>
<svg style="left:229px;top:302.1px;" width="20" height="20" viewBox="0 0 20 20"><path d="M1 19C5.500 19 7 18.500 8.500 16L11.500 4C13 1.500 14.500 1 19 1" stroke="#e2e2e2" stroke-width="0.95" fill="none"/><path d="M1 19H7.500M12.500 1H19" stroke="#e2e2e2" stroke-width="0.6" fill="none"/><circle cx="1" cy="19" r="0.750" fill="#e2e2e2"/><circle cx="7.5" cy="19" r="0.750" fill="#e2e2e2"/><circle cx="12.5" cy="1" r="0.750" fill="#e2e2e2"/><circle cx="19" cy="1" r="0.750" fill="#e2e2e2"/></svg>
<span style="left:139px;width:200px;text-align:center;top:322.7px;font-size:5.4px;color:#5c5c5c;transform:scaleX(0.95);-webkit-text-stroke:0;">sine</span>
<svg style="left:255.5px;top:302.1px;" width="20" height="20" viewBox="0 0 20 20"><path d="M1 19C10 19 14 12 19 1" stroke="#e2e2e2" stroke-width="0.95" fill="none"/><path d="M1 19H9M13 14L19 1" stroke="#e2e2e2" stroke-width="0.5" fill="none"/><circle cx="1" cy="19" r="0.750" fill="#e2e2e2"/><circle cx="9" cy="19" r="0.750" fill="#e2e2e2"/><circle cx="13" cy="14" r="0.750" fill="#e2e2e2"/><circle cx="19" cy="1" r="0.750" fill="#e2e2e2"/></svg>
<span style="left:165.5px;width:200px;text-align:center;top:322.7px;font-size:5.4px;color:#5c5c5c;transform:scaleX(0.95);-webkit-text-stroke:0;">quadIn</span>
<svg style="left:176.9px;top:336.0px;" width="20" height="20" viewBox="0 0 20 20"><path d="M1 19C5 8 10 1 19 1" stroke="#e2e2e2" stroke-width="0.95" fill="none"/><path d="M1 19L7 6M11 1H19" stroke="#e2e2e2" stroke-width="0.5" fill="none"/><circle cx="1" cy="19" r="0.750" fill="#e2e2e2"/><circle cx="7" cy="6" r="0.750" fill="#e2e2e2"/><circle cx="11" cy="1" r="0.750" fill="#e2e2e2"/><circle cx="19" cy="1" r="0.750" fill="#e2e2e2"/></svg>
<span style="left:86.9px;width:200px;text-align:center;top:355.8px;font-size:5.4px;color:#5c5c5c;transform:scaleX(0.95);-webkit-text-stroke:0;">quadOut</span>
<svg style="left:203.5px;top:336.0px;" width="20" height="20" viewBox="0 0 20 20"><path d="M1 19C5.500 19 7 18.500 8.500 16L11.500 4C13 1.500 14.500 1 19 1" stroke="#e2e2e2" stroke-width="0.95" fill="none"/><path d="M1 19H7.500M12.500 1H19" stroke="#e2e2e2" stroke-width="0.6" fill="none"/><circle cx="1" cy="19" r="0.750" fill="#e2e2e2"/><circle cx="7.5" cy="19" r="0.750" fill="#e2e2e2"/><circle cx="12.5" cy="1" r="0.750" fill="#e2e2e2"/><circle cx="19" cy="1" r="0.750" fill="#e2e2e2"/></svg>
<span style="left:113.5px;width:200px;text-align:center;top:355.8px;font-size:5.4px;color:#5c5c5c;transform:scaleX(0.95);-webkit-text-stroke:0;">quad</span>
<div style="left:227.2px;top:334.1px;width:23.7px;height:23.7px;background:#4a8de0;"></div>
<svg style="left:229px;top:336.0px;" width="20" height="20" viewBox="0 0 20 20"><path d="M1 19C11 19 16 12 19 1" stroke="#fff" stroke-width="1" fill="none"/><path d="M1 19H9M14.500 16L19 1" stroke="#eee" stroke-width="0.5" fill="none"/><circle cx="9" cy="19" r="0.750" fill="#e2e2e2"/><circle cx="14.5" cy="16" r="0.750" fill="#e2e2e2"/></svg>
<span style="left:139px;width:200px;text-align:center;top:355.8px;font-size:5.4px;color:#e8e8e8;transform:scaleX(0.95);-webkit-text-stroke:0;">cubicIn</span>
<svg style="left:255.5px;top:336.0px;" width="20" height="20" viewBox="0 0 20 20"><path d="M1 19C3 7 9 1 19 1" stroke="#e2e2e2" stroke-width="0.95" fill="none"/><path d="M1 19L5 4M11 1H19" stroke="#e2e2e2" stroke-width="0.5" fill="none"/><circle cx="1" cy="19" r="0.750" fill="#e2e2e2"/><circle cx="5" cy="4" r="0.750" fill="#e2e2e2"/><circle cx="11" cy="1" r="0.750" fill="#e2e2e2"/><circle cx="19" cy="1" r="0.750" fill="#e2e2e2"/></svg>
<span style="left:165.5px;width:200px;text-align:center;top:355.8px;font-size:5.4px;color:#5c5c5c;transform:scaleX(0.95);-webkit-text-stroke:0;">cubicOut</span>
<div style="left:173.3px;top:363.8px;width:124.8px;height:2px;background:#030303;"></div>
<div style="left:300.4px;top:44.6px;width:581px;height:319.2px;background:#1d1d1d;"></div>
<svg style="left:305.5px;top:50px;" width="5" height="5" viewBox="0 0 5 5"><path d="M0.800 0.800l3 3M3.800 0.800l-3 3" stroke="#9a9a9a" stroke-width="0.600"/></svg>
<div style="left:314.2px;top:48.5px;width:5.3px;height:5.5px;background:#b9a272;"></div>
<svg style="left:324.5px;top:47.8px;" width="6" height="7" viewBox="0 0 6 7"><rect x="0.800" y="3" width="4.200" height="3.400" rx="0.500" fill="#d0d0d0"/><path d="M1.800 3V1.900a1.300 1.300 0 0 1 2.600 0" stroke="#d0d0d0" stroke-width="0.700" fill="none"/><rect x="2.500" y="4" width="0.800" height="1.400" fill="#1d1d1d"/></svg>
<span style="left:334.9px;top:46.5px;font-size:6.82px;color:#dcdcdc;transform:scaleX(0.8739);transform-origin:0 50%;">Composition</span>
<span style="left:369.2px;top:46.5px;font-size:6.82px;color:#dcdcdc;transform:scaleX(0.8851);transform-origin:0 50%;">Intro animation</span>
<svg style="left:415px;top:50px;" width="5" height="5" viewBox="0 0 5 5"><path d="M0.400 0.800h4.200M0.400 2.300h4.200M0.400 3.800h4.200" stroke="#8a8a8a" stroke-width="0.700"/></svg>
<div style="left:310.3px;top:62.2px;width:58.5px;height:12.7px;background:#464646;border-radius:2px;"></div>
<span style="left:315.6px;top:64.2px;font-size:6.93px;color:#e6e6e6;transform:scaleX(0.8822);transform-origin:0 50%;">Intro animation</span>
<svg style="left:362.5px;top:66.8px;" width="5" height="5.5" viewBox="0 0 5 5.5"><path d="M3.400 0.600L1.200 2.700l2.200 2.100" stroke="#e0e0e0" stroke-width="0.900" fill="none"/></svg>
<span style="left:373.9px;top:64.2px;font-size:6.93px;color:#c4c4c4;transform:scaleX(0.8122);transform-origin:0 50%;">Search bar</span>
<div style="left:300.4px;top:77.3px;width:581px;height:1.7px;background:#141414;"></div>
<div style="left:353.7px;top:80.1px;width:475.3px;height:267.4px;background:#000;"></div>
<div style="left:354.8px;top:81.2px;width:473.1px;height:265.3px;background:#ffffff;"></div>
<div style="left:0;top:0;width:0;height:0;"><span style="left:440.77px;top:184.8px;height:60px;line-height:60px;font-size:54.8px;font-weight:bold;transform:scale(0.9555,1);transform-origin:0 49px;background:linear-gradient(#383838 18%,#000 80%);-webkit-background-clip:text;background-clip:text;color:transparent;-webkit-text-stroke:0;">S</span><span style="left:472.90px;top:184.8px;height:60px;line-height:60px;font-size:54.8px;font-weight:bold;transform:scale(1.0678,1);transform-origin:0 49px;background:linear-gradient(#383838 18%,#000 80%);-webkit-background-clip:text;background-clip:text;color:transparent;-webkit-text-stroke:0;">m</span><span style="left:521.39px;top:184.8px;height:60px;line-height:60px;font-size:54.8px;font-weight:bold;transform:scale(0.9482,1);transform-origin:0 49px;background:linear-gradient(#383838 18%,#000 80%);-webkit-background-clip:text;background-clip:text;color:transparent;-webkit-text-stroke:0;">o</span><span style="left:551.09px;top:184.8px;height:60px;line-height:60px;font-size:54.8px;font-weight:bold;transform:scale(0.9482,1);transform-origin:0 49px;background:linear-gradient(#383838 18%,#000 80%);-webkit-background-clip:text;background-clip:text;color:transparent;-webkit-text-stroke:0;">o</span><span style="left:580.77px;top:184.8px;height:60px;line-height:60px;font-size:54.8px;font-weight:bold;transform:scale(1.0175,1);transform-origin:0 49px;background:linear-gradient(#383838 18%,#000 80%);-webkit-background-clip:text;background-clip:text;color:transparent;-webkit-text-stroke:0;">t</span><span style="left:597.00px;top:184.8px;height:60px;line-height:60px;font-size:54.8px;font-weight:bold;transform:scale(1.0423,0.95);transform-origin:0 49px;background:linear-gradient(#383838 18%,#000 80%);-webkit-background-clip:text;background-clip:text;color:transparent;-webkit-text-stroke:0;">h</span></div>
<div style="left:0;top:0;width:0;height:0;"><span style="left:640.26px;top:192.8px;height:60px;line-height:60px;font-size:54.8px;font-weight:bold;transform:scale(0.9369,1);transform-origin:0 49px;background:linear-gradient(#666 20%,#242424 82%);-webkit-background-clip:text;background-clip:text;color:transparent;-webkit-text-stroke:0;">T</span><span style="left:665.11px;top:192.8px;height:60px;line-height:60px;font-size:54.8px;font-weight:bold;transform:scale(1.0385,1);transform-origin:0 49px;background:linear-gradient(#666 20%,#242424 82%);-webkit-background-clip:text;background-clip:text;color:transparent;-webkit-text-stroke:0;">e</span><span style="left:694.65px;top:192.8px;height:60px;line-height:60px;font-size:54.8px;font-weight:bold;transform:scale(0.9431,1);transform-origin:0 49px;background:linear-gradient(#666 20%,#242424 82%);-webkit-background-clip:text;background-clip:text;color:transparent;-webkit-text-stroke:0;">x</span><span style="left:722.36px;top:192.8px;height:60px;line-height:60px;font-size:54.8px;font-weight:bold;transform:scale(1.0299,1);transform-origin:0 49px;background:linear-gradient(#666 20%,#242424 82%);-webkit-background-clip:text;background-clip:text;color:transparent;-webkit-text-stroke:0;">t</span></div>
<svg style="left:440px;top:230px;" width="130" height="25" viewBox="0 0 130 25"><path d="M12.600 15.600C12.400 14.600 13.400 14.200 14.600 13.900C40 9.400 75 8 113.200 8C114.200 8.100 114.200 9.500 113.200 9.700C78 10.600 45 13 16 17.700C14.400 18 12.900 17.200 12.600 15.600z" fill="#f00f26"/></svg>
<div style="left:300.4px;top:349px;width:581px;height:1.6px;background:#151515;"></div>
<div style="left:305.2px;top:353px;width:41.8px;height:9.6px;background:#0f0f0f;border-radius:2px;box-shadow:inset 0 0 0 0.700px #303030;"></div>
<span style="left:310px;top:352px;font-size:5.8px;color:#c8c8c8;transform:scaleX(0.9945);transform-origin:0 50%;">(46,2%)</span>
<svg style="left:337.5px;top:355.8px;" width="6" height="5" viewBox="0 0 6 5"><path d="M0.600 1l2.200 2.200L5 1" stroke="#d0d0d0" stroke-width="0.900" fill="none"/></svg>
<div style="left:357.6px;top:353px;width:46.9px;height:9.6px;background:#0f0f0f;border-radius:2px;box-shadow:inset 0 0 0 0.700px #303030;"></div>
<span style="left:362.5px;top:352px;font-size:5.8px;color:#c8c8c8;transform:scaleX(1.0274);transform-origin:0 50%;">Full</span>
<svg style="left:395.3px;top:355.8px;" width="6" height="5" viewBox="0 0 6 5"><path d="M0.600 1l2.200 2.200L5 1" stroke="#d0d0d0" stroke-width="0.900" fill="none"/></svg>
<div style="left:352px;top:353.5px;width:0.7px;height:9px;background:#2e2e2e;"></div>
<div style="left:409.8px;top:353.5px;width:0.7px;height:9px;background:#2e2e2e;"></div>
<div style="left:481px;top:353.5px;width:0.7px;height:9px;background:#2e2e2e;"></div>
<div style="left:533px;top:353.5px;width:0.7px;height:9px;background:#2e2e2e;"></div>
<div style="left:568px;top:353.5px;width:0.7px;height:9px;background:#2e2e2e;"></div>
<div style="left:615.4px;top:353.5px;width:0.7px;height:9px;background:#2e2e2e;"></div>
<svg style="left:415.5px;top:354px;" width="8" height="8" viewBox="0 0 8 8"><rect x="0.600" y="0.800" width="6.400" height="5.400" rx="0.600" fill="none" stroke="#c4c4c4" stroke-width="0.700"/><path d="M3.800 2v3M2.300 3.500h3" stroke="#c4c4c4" stroke-width="0.700"/><path d="M6 6l1.600 1.600" stroke="#c4c4c4" stroke-width="0.800"/></svg>
<svg style="left:428.7px;top:354px;" width="8" height="8" viewBox="0 0 8 8"><rect x="0.600" y="1" width="6.800" height="5.600" fill="none" stroke="#c4c4c4" stroke-width="0.700"/><path d="M2 2.300l4 3M6 2.300l-4 3" stroke="#c4c4c4" stroke-width="0.500"/><circle cx="4" cy="3.800" r="1" fill="#c4c4c4"/></svg>
<svg style="left:441.6px;top:354px;" width="8" height="8" viewBox="0 0 8 8"><path d="M1.400 6.600V2.600l4.400-1.800v5.800z" fill="none" stroke="#c4c4c4" stroke-width="0.700"/><path d="M0.300 6.600h7.400M6.600 0.300v7" stroke="#c4c4c4" stroke-width="0.500"/></svg>
<svg style="left:454.5px;top:354px;" width="8" height="8" viewBox="0 0 8 8"><rect x="0.600" y="1" width="6.800" height="5.600" rx="0.600" fill="none" stroke="#c4c4c4" stroke-width="0.700"/><rect x="2.200" y="2.500" width="3.600" height="2.600" fill="#c4c4c4"/></svg>
<svg style="left:467.4px;top:354px;" width="8" height="8" viewBox="0 0 8 8"><rect x="0.600" y="0.800" width="6.400" height="4.600" rx="0.500" fill="none" stroke="#c4c4c4" stroke-width="0.700"/><path d="M3.800 1.800v2.600M2.500 3.100h2.600" stroke="#c4c4c4" stroke-width="0.600"/><path d="M4.600 5.600l1 1.800 1-1.800z" fill="#c4c4c4"/></svg>
<svg style="left:487.4px;top:354px;" width="8" height="8" viewBox="0 0 8 8"><circle cx="4" cy="2.400" r="1.700" fill="#e0443a"/><circle cx="2.400" cy="5" r="1.700" fill="#49b848"/><circle cx="5.600" cy="5" r="1.700" fill="#3b7fe0"/></svg>
<svg style="left:500.2px;top:354px;" width="8" height="8" viewBox="0 0 8 8"><circle cx="4" cy="4" r="2.300" fill="none" stroke="#c4c4c4" stroke-width="1.500"/><path d="M4 0.300v1.200M4 6.500v1.200M0.300 4h1.200M6.500 4h1.200" stroke="#c4c4c4" stroke-width="1"/></svg>
<span style="left:513.3px;top:352px;font-size:5.8px;color:#3f8de8;transform:scaleX(0.9779);transform-origin:0 50%;">+0,0</span>
<svg style="left:540.5px;top:354px;" width="8" height="8" viewBox="0 0 8 8"><rect x="0.500" y="2" width="7" height="4.800" rx="0.700" fill="#c4c4c4"/><rect x="2.600" y="1" width="2.800" height="1.400" fill="#c4c4c4"/><circle cx="4" cy="4.400" r="1.400" fill="#1d1d1d"/></svg>
<svg style="left:553.7px;top:354px;" width="8" height="8" viewBox="0 0 8 8"><g fill="none" stroke="#6a6a6a" stroke-width="0.900"><rect x="0.800" y="3.800" width="4" height="2.400" rx="1.200" transform="rotate(-35 2.800 5)"/><rect x="3.200" y="1.800" width="4" height="2.400" rx="1.200" transform="rotate(-35 5.200 3)"/></g></svg>
<div style="left:572.6px;top:353px;width:37.7px;height:9.6px;background:#0f0f0f;border-radius:2px;box-shadow:inset 0 0 0 0.700px #303030;"></div>
<span style="left:491.3px;width:200px;text-align:center;top:352px;font-size:5.8px;color:#c8c8c8;transform:scaleX(0.9888);">0:00:00:33</span>
<div style="left:884.1px;top:44.6px;width:139.9px;height:319.2px;background:#1d1d1d;"></div>
<span style="left:890.2px;top:45.9px;font-size:7.15px;color:#e4e4e4;transform:scaleX(0.776);transform-origin:0 50%;">Effects &amp; Presets</span>
<svg style="left:1008.5px;top:49.4px;" width="5" height="5" viewBox="0 0 5 5"><path d="M0.400 0.800h4.200M0.400 2.300h4.200M0.400 3.800h4.200" stroke="#8a8a8a" stroke-width="0.700"/></svg>
<div style="left:886.7px;top:59.6px;width:129.8px;height:9.4px;background:#111111;border-radius:2px;box-shadow:inset 0 0 0 0.600px #2e2e2e;"></div>
<svg style="left:889.7px;top:61.4px;" width="10" height="6" viewBox="0 0 10 6"><circle cx="2.400" cy="2.500" r="1.800" fill="none" stroke="#cfcfcf" stroke-width="0.850"/><path d="M3.700 3.800l1.700 1.700" stroke="#cfcfcf" stroke-width="0.900"/><path d="M5.600 3.100l1.100 1.100 1.100-1.100" stroke="#cfcfcf" stroke-width="0.750" fill="none"/></svg>
<div style="left:886px;top:79.9px;width:132px;height:0.6px;background:#141414;"></div>
<svg style="left:886.3px;top:73.1px;" width="4" height="5" viewBox="0 0 4 5"><path d="M0.900 0.300l2.100 2.200-2.100 2.200" stroke="#d8d8d8" stroke-width="1.150" fill="none"/></svg>
<span style="left:892px;top:69.9px;font-size:6.71px;color:#d2d2d2;transform:scaleX(0.845);transform-origin:0 50%;">* Animation Presets</span>
<div style="left:886px;top:88.97px;width:132px;height:0.6px;background:#141414;"></div>
<svg style="left:886.3px;top:82.17px;" width="4" height="5" viewBox="0 0 4 5"><path d="M0.900 0.300l2.100 2.200-2.100 2.200" stroke="#d8d8d8" stroke-width="1.150" fill="none"/></svg>
<span style="left:892px;top:78.97px;font-size:6.71px;color:#d2d2d2;transform:scaleX(0.845);transform-origin:0 50%;">3D Channel</span>
<div style="left:886px;top:98.04px;width:132px;height:0.6px;background:#141414;"></div>
<svg style="left:886.3px;top:91.24px;" width="4" height="5" viewBox="0 0 4 5"><path d="M0.900 0.300l2.100 2.200-2.100 2.200" stroke="#d8d8d8" stroke-width="1.150" fill="none"/></svg>
<span style="left:892px;top:88.04px;font-size:6.71px;color:#d2d2d2;transform:scaleX(0.845);transform-origin:0 50%;">Audio</span>
<div style="left:886px;top:107.11px;width:132px;height:0.6px;background:#141414;"></div>
<svg style="left:886.3px;top:100.31px;" width="4" height="5" viewBox="0 0 4 5"><path d="M0.900 0.300l2.100 2.200-2.100 2.200" stroke="#d8d8d8" stroke-width="1.150" fill="none"/></svg>
<span style="left:892px;top:97.11px;font-size:6.71px;color:#d2d2d2;transform:scaleX(0.845);transform-origin:0 50%;">Blur &amp; Sharpen</span>
<div style="left:886px;top:116.18px;width:132px;height:0.6px;background:#141414;"></div>
<svg style="left:886.3px;top:109.38px;" width="4" height="5" viewBox="0 0 4 5"><path d="M0.900 0.300l2.100 2.200-2.100 2.200" stroke="#d8d8d8" stroke-width="1.150" fill="none"/></svg>
<span style="left:892px;top:106.18px;font-size:6.71px;color:#d2d2d2;transform:scaleX(0.845);transform-origin:0 50%;">Boris FX Mocha</span>
<div style="left:886px;top:125.25px;width:132px;height:0.6px;background:#141414;"></div>
<svg style="left:886.3px;top:118.45px;" width="4" height="5" viewBox="0 0 4 5"><path d="M0.900 0.300l2.100 2.200-2.100 2.200" stroke="#d8d8d8" stroke-width="1.150" fill="none"/></svg>
<span style="left:892px;top:115.25px;font-size:6.71px;color:#d2d2d2;transform:scaleX(0.845);transform-origin:0 50%;">Channel</span>
<div style="left:886px;top:134.32px;width:132px;height:0.6px;background:#141414;"></div>
<svg style="left:886.3px;top:127.52px;" width="4" height="5" viewBox="0 0 4 5"><path d="M0.900 0.300l2.100 2.200-2.100 2.200" stroke="#d8d8d8" stroke-width="1.150" fill="none"/></svg>
<span style="left:892px;top:124.32px;font-size:6.71px;color:#d2d2d2;transform:scaleX(0.845);transform-origin:0 50%;">Cinema 4D</span>
<div style="left:886px;top:143.39px;width:132px;height:0.6px;background:#141414;"></div>
<svg style="left:886.3px;top:136.59px;" width="4" height="5" viewBox="0 0 4 5"><path d="M0.900 0.300l2.100 2.200-2.100 2.200" stroke="#d8d8d8" stroke-width="1.150" fill="none"/></svg>
<span style="left:892px;top:133.39px;font-size:6.71px;color:#d2d2d2;transform:scaleX(0.845);transform-origin:0 50%;">Color Correction</span>
<div style="left:886px;top:152.46px;width:132px;height:0.6px;background:#141414;"></div>
<svg style="left:886.3px;top:145.66px;" width="4" height="5" viewBox="0 0 4 5"><path d="M0.900 0.300l2.100 2.200-2.100 2.200" stroke="#d8d8d8" stroke-width="1.150" fill="none"/></svg>
<span style="left:892px;top:142.46px;font-size:6.71px;color:#d2d2d2;transform:scaleX(0.845);transform-origin:0 50%;">Distort</span>
<div style="left:886px;top:161.53px;width:132px;height:0.6px;background:#141414;"></div>
<svg style="left:886.3px;top:154.73px;" width="4" height="5" viewBox="0 0 4 5"><path d="M0.900 0.300l2.100 2.200-2.100 2.200" stroke="#d8d8d8" stroke-width="1.150" fill="none"/></svg>
<span style="left:892px;top:151.53px;font-size:6.71px;color:#d2d2d2;transform:scaleX(0.845);transform-origin:0 50%;">Expression Controls</span>
<div style="left:886px;top:170.6px;width:132px;height:0.6px;background:#141414;"></div>
<svg style="left:886.3px;top:163.8px;" width="4" height="5" viewBox="0 0 4 5"><path d="M0.900 0.300l2.100 2.200-2.100 2.200" stroke="#d8d8d8" stroke-width="1.150" fill="none"/></svg>
<span style="left:892px;top:160.6px;font-size:6.71px;color:#d2d2d2;transform:scaleX(0.845);transform-origin:0 50%;">Generate</span>
<div style="left:886px;top:179.67px;width:132px;height:0.6px;background:#141414;"></div>
<svg style="left:886.3px;top:172.87px;" width="4" height="5" viewBox="0 0 4 5"><path d="M0.900 0.300l2.100 2.200-2.100 2.200" stroke="#d8d8d8" stroke-width="1.150" fill="none"/></svg>
<span style="left:892px;top:169.67px;font-size:6.71px;color:#d2d2d2;transform:scaleX(0.845);transform-origin:0 50%;">Immersive Video</span>
<div style="left:886px;top:188.74px;width:132px;height:0.6px;background:#141414;"></div>
<svg style="left:886.3px;top:181.94px;" width="4" height="5" viewBox="0 0 4 5"><path d="M0.900 0.300l2.100 2.200-2.100 2.200" stroke="#d8d8d8" stroke-width="1.150" fill="none"/></svg>
<span style="left:892px;top:178.74px;font-size:6.71px;color:#d2d2d2;transform:scaleX(0.845);transform-origin:0 50%;">Keying</span>
<div style="left:886px;top:197.81px;width:132px;height:0.6px;background:#141414;"></div>
<svg style="left:886.3px;top:191.01px;" width="4" height="5" viewBox="0 0 4 5"><path d="M0.900 0.300l2.100 2.200-2.100 2.200" stroke="#d8d8d8" stroke-width="1.150" fill="none"/></svg>
<span style="left:892px;top:187.81px;font-size:6.71px;color:#d2d2d2;transform:scaleX(0.845);transform-origin:0 50%;">Matte</span>
<div style="left:886px;top:206.88px;width:132px;height:0.6px;background:#141414;"></div>
<svg style="left:886.3px;top:200.08px;" width="4" height="5" viewBox="0 0 4 5"><path d="M0.900 0.300l2.100 2.200-2.100 2.200" stroke="#d8d8d8" stroke-width="1.150" fill="none"/></svg>
<span style="left:892px;top:196.88px;font-size:6.71px;color:#d2d2d2;transform:scaleX(0.845);transform-origin:0 50%;">Noise &amp; Grain</span>
<div style="left:886px;top:215.95px;width:132px;height:0.6px;background:#141414;"></div>
<svg style="left:886.3px;top:209.15px;" width="4" height="5" viewBox="0 0 4 5"><path d="M0.900 0.300l2.100 2.200-2.100 2.200" stroke="#d8d8d8" stroke-width="1.150" fill="none"/></svg>
<span style="left:892px;top:205.95px;font-size:6.71px;color:#d2d2d2;transform:scaleX(0.845);transform-origin:0 50%;">Obsolete</span>
<div style="left:886px;top:225.02px;width:132px;height:0.6px;background:#141414;"></div>
<svg style="left:886.3px;top:218.22px;" width="4" height="5" viewBox="0 0 4 5"><path d="M0.900 0.300l2.100 2.200-2.100 2.200" stroke="#d8d8d8" stroke-width="1.150" fill="none"/></svg>
<span style="left:892px;top:215.02px;font-size:6.71px;color:#d2d2d2;transform:scaleX(0.845);transform-origin:0 50%;">Perspective</span>
<div style="left:886px;top:234.09px;width:132px;height:0.6px;background:#141414;"></div>
<svg style="left:886.3px;top:227.29px;" width="4" height="5" viewBox="0 0 4 5"><path d="M0.900 0.300l2.100 2.200-2.100 2.200" stroke="#d8d8d8" stroke-width="1.150" fill="none"/></svg>
<span style="left:892px;top:224.09px;font-size:6.71px;color:#d2d2d2;transform:scaleX(0.845);transform-origin:0 50%;">Plugin Everything</span>
<div style="left:886px;top:243.16px;width:132px;height:0.6px;background:#141414;"></div>
<svg style="left:886.3px;top:236.36px;" width="4" height="5" viewBox="0 0 4 5"><path d="M0.900 0.300l2.100 2.200-2.100 2.200" stroke="#d8d8d8" stroke-width="1.150" fill="none"/></svg>
<span style="left:892px;top:233.16px;font-size:6.71px;color:#d2d2d2;transform:scaleX(0.845);transform-origin:0 50%;">Simulation</span>
<div style="left:886px;top:252.23px;width:132px;height:0.6px;background:#141414;"></div>
<svg style="left:886.3px;top:245.43px;" width="4" height="5" viewBox="0 0 4 5"><path d="M0.900 0.300l2.100 2.200-2.100 2.200" stroke="#d8d8d8" stroke-width="1.150" fill="none"/></svg>
<span style="left:892px;top:242.23px;font-size:6.71px;color:#d2d2d2;transform:scaleX(0.845);transform-origin:0 50%;">Stylize</span>
<div style="left:886px;top:261.3px;width:132px;height:0.6px;background:#141414;"></div>
<svg style="left:886.3px;top:254.5px;" width="4" height="5" viewBox="0 0 4 5"><path d="M0.900 0.300l2.100 2.200-2.100 2.200" stroke="#d8d8d8" stroke-width="1.150" fill="none"/></svg>
<span style="left:892px;top:251.3px;font-size:6.71px;color:#d2d2d2;transform:scaleX(0.845);transform-origin:0 50%;">Text</span>
<div style="left:886px;top:270.37px;width:132px;height:0.6px;background:#141414;"></div>
<svg style="left:886.3px;top:263.57px;" width="4" height="5" viewBox="0 0 4 5"><path d="M0.900 0.300l2.100 2.200-2.100 2.200" stroke="#d8d8d8" stroke-width="1.150" fill="none"/></svg>
<span style="left:892px;top:260.37px;font-size:6.71px;color:#d2d2d2;transform:scaleX(0.845);transform-origin:0 50%;">Time</span>
<div style="left:886px;top:279.44px;width:132px;height:0.6px;background:#141414;"></div>
<svg style="left:886.3px;top:272.64px;" width="4" height="5" viewBox="0 0 4 5"><path d="M0.900 0.300l2.100 2.200-2.100 2.200" stroke="#d8d8d8" stroke-width="1.150" fill="none"/></svg>
<span style="left:892px;top:269.44px;font-size:6.71px;color:#d2d2d2;transform:scaleX(0.845);transform-origin:0 50%;">Transition</span>
<div style="left:886px;top:288.51px;width:132px;height:0.6px;background:#141414;"></div>
<svg style="left:886.3px;top:281.71px;" width="4" height="5" viewBox="0 0 4 5"><path d="M0.900 0.300l2.100 2.200-2.100 2.200" stroke="#d8d8d8" stroke-width="1.150" fill="none"/></svg>
<span style="left:892px;top:278.51px;font-size:6.71px;color:#d2d2d2;transform:scaleX(0.845);transform-origin:0 50%;">Utility</span>
<div style="left:884.6px;top:302.5px;width:134.2px;height:1.2px;background:#060606;"></div>
<svg style="left:1008px;top:292.7px;" width="7" height="7" viewBox="0 0 7 7"><path d="M0.600 0.600h5.800v5.800H0.600z" fill="#c8c8c8"/><path d="M3.200 6.400V3.200h3.200" stroke="#1d1d1d" stroke-width="0.700" fill="none"/></svg>
<span style="left:890px;top:305.0px;font-size:6.71px;color:#d8d8d8;transform:scaleX(0.845);transform-origin:0 50%;">Character</span>
<span style="left:890px;top:318.8px;font-size:6.71px;color:#d8d8d8;transform:scaleX(0.845);transform-origin:0 50%;">Tracker</span>
<span style="left:890px;top:332.6px;font-size:6.71px;color:#d8d8d8;transform:scaleX(0.845);transform-origin:0 50%;">Properties</span>
<span style="left:890px;top:346.4px;font-size:6.71px;color:#d8d8d8;transform:scaleX(0.845);transform-origin:0 50%;">Info</span>
<div style="left:884.6px;top:316.5px;width:134.2px;height:1.2px;background:#060606;"></div>
<div style="left:884.6px;top:330.2px;width:134.2px;height:1.2px;background:#060606;"></div>
<div style="left:884.6px;top:344px;width:134.2px;height:1.2px;background:#060606;"></div>
<div style="left:884.6px;top:357.9px;width:134.2px;height:1.2px;background:#060606;"></div>
<div style="left:1018.4px;top:288.4px;width:0.7px;height:14.5px;background:#101010;"></div>
<div style="left:0px;top:365.7px;width:1022.3px;height:184.3px;background:#1d1d1d;"></div>
<svg style="left:5.5px;top:370.2px;" width="5" height="5" viewBox="0 0 5 5"><path d="M0.800 0.800l3 3M3.800 0.800l-3 3" stroke="#9a9a9a" stroke-width="0.600"/></svg>
<div style="left:14.3px;top:369.5px;width:5.3px;height:5.5px;background:#b9a272;"></div>
<span style="left:26px;top:366.8px;font-size:6.93px;color:#e6e6e6;transform:scaleX(0.8669);transform-origin:0 50%;">Intro animation</span>
<svg style="left:71.3px;top:370.2px;" width="5" height="5" viewBox="0 0 5 5"><path d="M0.400 0.800h4.200M0.400 2.300h4.200M0.400 3.800h4.200" stroke="#8a8a8a" stroke-width="0.700"/></svg>
<div style="left:6.3px;top:377.3px;width:69.4px;height:1.5px;background:#9a9a9a;"></div>
<div style="left:95.4px;top:369.5px;width:5.3px;height:5.5px;background:#b9a272;"></div>
<span style="left:106.4px;top:366.8px;font-size:6.93px;color:#c4c4c4;transform:scaleX(0.8151);transform-origin:0 50%;">Search bar</span>
<span style="left:164.4px;top:366.8px;font-size:6.93px;color:#c4c4c4;transform:scaleX(0.8256);transform-origin:0 50%;">Render Queue</span>
<span style="left:7.5px;top:378.9px;font-size:9.3px;color:#3f8de8;transform:scaleX(0.8759);transform-origin:0 50%;-webkit-text-stroke:0.400px #3f8de8;">0:00:00:33</span>
<span style="left:6.5px;top:387.2px;font-size:5px;color:#2f6ab5;transform:scaleX(1.0535);transform-origin:0 50%;">00033 (60.00 fps)</span>
<div style="left:53px;top:382.8px;width:195px;height:10px;background:#0f0f0f;border-radius:2.500px;box-shadow:inset 0 0 0 0.600px #2a2a2a;"></div>
<svg style="left:57px;top:385px;" width="10" height="6" viewBox="0 0 10 6"><circle cx="2.400" cy="2.500" r="1.800" fill="none" stroke="#cfcfcf" stroke-width="0.850"/><path d="M3.700 3.800l1.700 1.700" stroke="#cfcfcf" stroke-width="0.900"/><path d="M5.600 3.100l1.100 1.100 1.100-1.100" stroke="#cfcfcf" stroke-width="0.750" fill="none"/></svg>
<svg style="left:255.4px;top:384px;" width="9" height="9" viewBox="0 0 9 9"><path d="M0.600 2.200h4.400M3 2.200v4.400h2.600" stroke="#c8c8c8" stroke-width="0.700" fill="none"/><rect x="5" y="1.200" width="2.200" height="2" fill="#c8c8c8"/><rect x="5.600" y="5.600" width="2.200" height="2" fill="#c8c8c8"/></svg>
<svg style="left:268px;top:384px;" width="9" height="9" viewBox="0 0 9 9"><path d="M0.800 4.600c0-2 1.600-3.400 3.700-3.400s3.700 1.400 3.700 3.400z" fill="#c8c8c8"/><path d="M4.500 2.800v5M2.800 5.800h3.400" stroke="#c8c8c8" stroke-width="0.800"/><path d="M4.500 1v4" stroke="#1d1d1d" stroke-width="0.500"/></svg>
<svg style="left:280.5px;top:384px;" width="9" height="9" viewBox="0 0 9 9"><rect x="2.600" y="0.800" width="5.600" height="5.600" fill="#c8c8c8"/><rect x="0.800" y="2.600" width="5.600" height="5.600" fill="#8a8a8a" stroke="#c8c8c8" stroke-width="0.600"/></svg>
<div style="left:292.7px;top:383px;width:10.6px;height:11px;background:#4a4a4a;border-radius:2px;"></div>
<svg style="left:293.5px;top:384px;" width="9" height="9" viewBox="0 0 9 9"><g fill="none" stroke="#d8d8d8" stroke-width="0.900"><rect x="1" y="3" width="7" height="3.400" rx="1.700" transform="rotate(-45 4.500 4.500)"/><path d="M2.400 7.400l4.800-4.800"/></g></svg>
<svg style="left:306.3px;top:384px;" width="9" height="9" viewBox="0 0 9 9"><rect x="0.800" y="1.600" width="7.400" height="6.200" rx="0.600" fill="none" stroke="#c8c8c8" stroke-width="0.700"/><path d="M2.200 3l4.600 3.600" stroke="#c8c8c8" stroke-width="0.600"/><path d="M2.400 0.600v1M6.600 0.600v1" stroke="#c8c8c8" stroke-width="0.600"/></svg>
<svg style="left:3.2px;top:400.7px;" width="7" height="5" viewBox="0 0 7 5"><path d="M0.300 2.500C1.300 1 2.300 0.400 3.500 0.400S5.700 1 6.700 2.500C5.700 4 4.700 4.600 3.500 4.600S1.300 4 0.300 2.500z" fill="#d8d8d8"/><circle cx="3.500" cy="2.500" r="1.100" fill="#1d1d1d"/></svg>
<svg style="left:11.5px;top:399.7px;" width="7" height="7" viewBox="0 0 7 7"><path d="M2.600 0.600v5.800L0.600 4.600V2.400z" fill="#c0c0c0"/><path d="M4 0.600a3 3 0 0 1 0 5.800z" fill="#c0c0c0"/></svg>
<svg style="left:20.3px;top:400.7px;" width="5" height="5" viewBox="0 0 5 5"><circle cx="2.500" cy="2.500" r="1.800" fill="#c0c0c0"/></svg>
<svg style="left:28px;top:399.4px;" width="6" height="7" viewBox="0 0 6 7"><rect x="0.600" y="3" width="4.800" height="3.600" rx="0.500" fill="#c0c0c0"/><path d="M1.600 3V2.100a1.400 1.400 0 0 1 2.800 0V3" stroke="#c0c0c0" stroke-width="0.800" fill="none"/></svg>
<svg style="left:43.5px;top:399.4px;" width="8" height="8" viewBox="0 0 8 8"><path d="M0.600 0.600h3l3.600 3.600-3 3L0.600 3.600z" fill="#c0c0c0"/><circle cx="2" cy="2" r="0.700" fill="#1d1d1d"/></svg>
<span style="left:57.3px;top:397.5px;font-size:5.5px;color:#a8a8a8;transform:scaleX(0.845);transform-origin:0 50%;font-style:italic;">#</span>
<span style="left:74.6px;top:397.5px;font-size:5.5px;color:#b8b8b8;transform:scaleX(0.865);transform-origin:0 50%;">Source Name</span>
<div style="left:36.5px;top:399.7px;width:0.7px;height:7.5px;background:#343434;"></div>
<div style="left:55px;top:399.7px;width:0.7px;height:7.5px;background:#343434;"></div>
<div style="left:70.8px;top:399.7px;width:0.7px;height:7.5px;background:#343434;"></div>
<div style="left:161.6px;top:399.7px;width:0.7px;height:7.5px;background:#343434;"></div>
<div style="left:235.8px;top:399.7px;width:0.7px;height:7.5px;background:#343434;"></div>
<div style="left:313.5px;top:399.7px;width:0.7px;height:7.5px;background:#343434;"></div>
<svg style="left:164.1px;top:400.0px;" width="7" height="6.5" viewBox="0 0 7 6.5"><path d="M1.200 4.400C1.200 2 2.200 0.500 3.500 0.500S5.800 2 5.800 4.400z" fill="#a8a8a8"/><path d="M0.300 4.600h6.400M1.400 5.800h1.400M4.200 5.800h1.400" stroke="#a8a8a8" stroke-width="0.800"/></svg>
<svg style="left:172.8px;top:400.2px;" width="6" height="6" viewBox="0 0 6 6"><circle cx="3" cy="3" r="1.500" fill="none" stroke="#c0c0c0" stroke-width="0.700"/><path d="M3 0.300v1M3 4.700v1M0.300 3h1M4.700 3h1" stroke="#c0c0c0" stroke-width="0.700"/></svg>
<svg style="left:180.4px;top:399.9px;" width="6" height="6.6" viewBox="0 0 6 6.6"><path d="M0.600 0.600L5.400 6" stroke="#c0c0c0" stroke-width="0.800"/></svg>
<span style="left:187.8px;top:396.9px;font-size:6.8px;font-style:italic;color:#c0c0c0;font-family:Liberation Serif,serif;letter-spacing:-0.300px;">fx</span>
<svg style="left:196.4px;top:400.0px;" width="6.5" height="6.5" viewBox="0 0 6.5 6.5"><rect x="0.400" y="0.400" width="5.700" height="5.700" fill="#c0c0c0"/><path d="M1.200 2h4M1.200 3.300h4M1.200 4.600h4" stroke="#555" stroke-width="0.500"/></svg>
<svg style="left:204.2px;top:399.7px;" width="7" height="7" viewBox="0 0 7 7"><g fill="none" stroke="#c0c0c0" stroke-width="0.800"><rect x="0.800" y="2.100" width="5.400" height="2.800" rx="1.400" transform="rotate(-45 3.500 3.500)"/><path d="M1.300 4.300L4.300 1.300M2.700 5.700L5.700 2.700"/></g></svg>
<svg style="left:212.7px;top:400.0px;" width="6.5" height="6.5" viewBox="0 0 6.5 6.5"><circle cx="3.200" cy="3.200" r="2.800" fill="#c0c0c0"/><path d="M3.200 0.400a2.800 2.800 0 0 0 0 5.600a1.400 1.400 0 0 0 0-2.800a1.400 1.400 0 0 1 0-2.800z" fill="#1d1d1d"/></svg>
<svg style="left:220.6px;top:400.0px;" width="6.5" height="6.5" viewBox="0 0 6.5 6.5"><circle cx="3.200" cy="3.200" r="2.500" fill="none" stroke="#c0c0c0" stroke-width="0.700"/><ellipse cx="3.200" cy="3.200" rx="1.100" ry="2.500" fill="none" stroke="#c0c0c0" stroke-width="0.500"/><path d="M0.700 3.200h5" stroke="#c0c0c0" stroke-width="0.500"/></svg>
<span style="left:239.6px;top:397.5px;font-size:5.5px;color:#b8b8b8;transform:scaleX(0.8961);transform-origin:0 50%;">Parent &amp; Link</span>
<div style="left:0px;top:407.7px;width:322.3px;height:131.7px;background:#171717;"></div>
<div style="left:0;top:407.7px;width:322.3px;height:4.72px;overflow:hidden;background:#212121">
<div style="left:0;top:-407.7px;width:322.3px;height:550px;">
<svg style="left:4.7px;top:405.82px;" width="4" height="5" viewBox="0 0 4 5"><path d="M3.600 0.300v4.400L0.500 2.500z" fill="#b8b8b8"/></svg>
<svg style="left:11.8px;top:405.32px;" width="6" height="6" viewBox="0 0 6 6"><path d="M3 0.800L5.200 3 3 5.200 0.800 3z" fill="none" stroke="#8a8a8a" stroke-width="0.700"/><circle cx="3" cy="3" r="0.600" fill="#8a8a8a"/></svg>
<svg style="left:20.8px;top:405.82px;" width="4" height="5" viewBox="0 0 4 5"><path d="M0.400 0.300v4.400L3.500 2.500z" fill="#d0d0d0"/></svg>
<svg style="left:65.3px;top:404.32px;" width="7" height="8" viewBox="0 0 7 8"><circle cx="3.500" cy="4.500" r="2.700" fill="none" stroke="#3f8de8" stroke-width="0.900"/><path d="M3.500 4.500V2.600M2.600 0.700h1.800M3.500 0.700v1" stroke="#3f8de8" stroke-width="0.800"/></svg>
<svg style="left:74.7px;top:404.82px;" width="7" height="7" viewBox="0 0 7 7"><path d="M0.700 0.500v6h6" stroke="#8a8a8a" stroke-width="0.700" fill="none"/><path d="M1.600 5.400l1.600-2.400 1.400 1 1.800-2.400" stroke="#8a8a8a" stroke-width="0.600" fill="none"/></svg>
<span style="left:85.6px;top:402.92px;font-size:6.82px;color:#dadada;transform:scaleX(0.8866);transform-origin:0 50%;">Position</span>
<span style="left:164.5px;top:402.92px;font-size:6.82px;color:#3f8de8;transform:scaleX(0.8611);transform-origin:0 50%;">960,0,540,0</span>
<svg style="left:245.8px;top:404.82px;" width="7" height="7" viewBox="0 0 7 7"><path d="M3.500 3.500a0.900 0.900 0 1 1 0.900 0.900a1.900 1.900 0 1 1 1.900-1.900a2.900 2.900 0 1 1-2.900-2.200" fill="none" stroke="#a8a8a8" stroke-width="0.650"/></svg>
</div></div>
<div style="left:0px;top:413.25px;width:322.3px;height:8.25px;background:#212121;"></div>
<svg style="left:4.7px;top:414.9px;" width="4" height="5" viewBox="0 0 4 5"><path d="M3.600 0.300v4.400L0.500 2.500z" fill="#555"/></svg>
<svg style="left:11.8px;top:414.4px;" width="6" height="6" viewBox="0 0 6 6"><path d="M3 0.800L5.200 3 3 5.200 0.800 3z" fill="none" stroke="#8a8a8a" stroke-width="0.700"/><circle cx="3" cy="3" r="0.600" fill="#8a8a8a"/></svg>
<svg style="left:20.8px;top:414.9px;" width="4" height="5" viewBox="0 0 4 5"><path d="M0.400 0.300v4.400L3.500 2.500z" fill="#d0d0d0"/></svg>
<svg style="left:65.3px;top:413.4px;" width="7" height="8" viewBox="0 0 7 8"><circle cx="3.500" cy="4.500" r="2.700" fill="none" stroke="#3f8de8" stroke-width="0.900"/><path d="M3.500 4.500V2.600M2.600 0.700h1.800M3.500 0.700v1" stroke="#3f8de8" stroke-width="0.800"/></svg>
<svg style="left:74.7px;top:413.9px;" width="7" height="7" viewBox="0 0 7 7"><path d="M0.700 0.500v6h6" stroke="#8a8a8a" stroke-width="0.700" fill="none"/><path d="M1.600 5.400l1.600-2.400 1.400 1 1.800-2.400" stroke="#8a8a8a" stroke-width="0.600" fill="none"/></svg>
<span style="left:85.6px;top:412.0px;font-size:6.82px;color:#dadada;transform:scaleX(0.7919);transform-origin:0 50%;">Scale</span>
<svg style="left:163.5px;top:415.4px;" width="7" height="4" viewBox="0 0 7 4"><rect x="0.400" y="0.700" width="3.400" height="2.600" rx="1.300" fill="none" stroke="#c8c8c8" stroke-width="0.700"/><rect x="3.200" y="0.700" width="3.400" height="2.600" rx="1.300" fill="none" stroke="#c8c8c8" stroke-width="0.700"/></svg>
<span style="left:174.3px;top:412.0px;font-size:6.82px;color:#3f8de8;transform:scaleX(0.844);transform-origin:0 50%;">100,0,100,0<i style="font-style:normal;color:#b0b0b0">%</i></span>
<svg style="left:245.8px;top:413.9px;" width="7" height="7" viewBox="0 0 7 7"><path d="M3.500 3.500a0.900 0.900 0 1 1 0.900 0.900a1.900 1.900 0 1 1 1.900-1.900a2.900 2.900 0 1 1-2.900-2.200" fill="none" stroke="#a8a8a8" stroke-width="0.650"/></svg>
<div style="left:0px;top:422.33px;width:322.3px;height:8.25px;background:#353535;"></div>
<svg style="left:3.2px;top:423.98px;" width="7" height="5" viewBox="0 0 7 5"><path d="M0.300 2.500C1.300 1 2.300 0.400 3.500 0.400S5.700 1 6.700 2.500C5.700 4 4.700 4.600 3.500 4.600S1.300 4 0.300 2.500z" fill="#d8d8d8"/><circle cx="3.500" cy="2.500" r="1.100" fill="#1d1d1d"/></svg>
<div style="left:19.8px;top:423.18px;width:6.2px;height:6.6px;background:#191919;"></div>
<div style="left:27.8px;top:423.18px;width:6.2px;height:6.6px;background:#191919;"></div>
<svg style="left:39.5px;top:423.98px;" width="4" height="5" viewBox="0 0 4 5"><path d="M0.900 0.300l2.100 2.200-2.100 2.200" stroke="#d0d0d0" stroke-width="1.150" fill="none"/></svg>
<div style="left:46.3px;top:423.48px;width:6.5px;height:6px;background:#3fa9a7;"></div>
<span style="left:57.4px;top:421.08px;font-size:6.71px;color:#c0c0c0;transform:scaleX(0.845);transform-origin:0 50%;">8</span>
<div style="left:73.6px;top:423.28px;width:6.5px;height:6.4px;background:#000;"></div>
<span style="left:83.2px;top:421.08px;font-size:6.82px;color:#dadada;transform:scaleX(0.8327);transform-origin:0 50%;">Black Solid 2</span>
<svg style="left:164.1px;top:423.28px;" width="7" height="6.5" viewBox="0 0 7 6.5"><path d="M1.200 4.400C1.200 2 2.200 0.500 3.500 0.500S5.800 2 5.800 4.400z" fill="#9c9c9c"/><path d="M0.300 4.600h6.400M1.400 5.800h1.400M4.200 5.800h1.400" stroke="#9c9c9c" stroke-width="0.800"/></svg>
<div style="left:172.9px;top:423.28px;width:6px;height:6.4px;background:#191919;"></div>
<div style="left:180.7px;top:423.28px;width:6.2px;height:6.4px;background:#191919;"></div>
<svg style="left:180.8px;top:423.18px;" width="6" height="6.6" viewBox="0 0 6 6.6"><path d="M0.400 6.200L5.600 0.400" stroke="#e8e8e8" stroke-width="1"/></svg>
<span style="left:187.8px;top:420.17999999999995px;font-size:6.8px;font-style:italic;color:#c8c8c8;font-family:Liberation Serif,serif;letter-spacing:-0.300px;">fx</span>
<svg style="left:204.2px;top:422.98px;" width="7" height="7" viewBox="0 0 7 7"><g fill="none" stroke="#b8b8b8" stroke-width="0.800"><rect x="0.800" y="2.100" width="5.400" height="2.800" rx="1.400" transform="rotate(-45 3.500 3.500)"/><path d="M1.300 4.300L4.300 1.300M2.700 5.700L5.700 2.700"/></g></svg>
<div style="left:212.9px;top:423.28px;width:6px;height:6.4px;background:#191919;"></div>
<div style="left:220.8px;top:423.28px;width:6px;height:6.4px;background:#191919;"></div>
<svg style="left:238.9px;top:422.98px;" width="7" height="7" viewBox="0 0 7 7"><path d="M3.500 3.500a0.900 0.900 0 1 1 0.900 0.900a1.900 1.900 0 1 1 1.900-1.900a2.900 2.900 0 1 1-2.900-2.200" fill="none" stroke="#a8a8a8" stroke-width="0.650"/></svg>
<div style="left:249.3px;top:423.08px;width:61.5px;height:6.8px;background:#111;border-radius:1.500px;"></div>
<span style="left:253.7px;top:421.08px;font-size:6.82px;color:#d8d8d8;transform:scaleX(0.8307);transform-origin:0 50%;">7. in Premiere Prc</span>
<svg style="left:301.1px;top:424.38px;" width="6.4" height="4.8" viewBox="0 0 6.4 4.8"><path d="M0.600 0.800l2.600 2.600 2.600-2.600" stroke="#e8e8e8" stroke-width="1.250" fill="none"/></svg>
<div style="left:0px;top:431.41px;width:322.3px;height:8.25px;background:#303030;"></div>
<svg style="left:3.2px;top:433.06px;" width="7" height="5" viewBox="0 0 7 5"><path d="M0.300 2.500C1.300 1 2.300 0.400 3.500 0.400S5.700 1 6.700 2.500C5.700 4 4.700 4.600 3.500 4.600S1.300 4 0.300 2.500z" fill="#d8d8d8"/><circle cx="3.500" cy="2.500" r="1.100" fill="#1d1d1d"/></svg>
<div style="left:19.8px;top:432.26px;width:6.2px;height:6.6px;background:#191919;"></div>
<div style="left:27.8px;top:432.26px;width:6.2px;height:6.6px;background:#191919;"></div>
<svg style="left:39.5px;top:433.06px;" width="4" height="5" viewBox="0 0 4 5"><path d="M0.900 0.300l2.100 2.200-2.100 2.200" stroke="#d0d0d0" stroke-width="1.150" fill="none"/></svg>
<div style="left:46.3px;top:432.56px;width:6.5px;height:6px;background:#f36dd2;"></div>
<span style="left:57.4px;top:430.16px;font-size:6.71px;color:#c0c0c0;transform:scaleX(0.845);transform-origin:0 50%;">9</span>
<div style="left:73.6px;top:432.36px;width:6.5px;height:6.4px;background:#fff;"></div>
<span style="left:83.2px;top:430.16px;font-size:6.82px;color:#dadada;transform:scaleX(0.8517);transform-origin:0 50%;">Adjustment Layer 1</span>
<svg style="left:164.1px;top:432.36px;" width="7" height="6.5" viewBox="0 0 7 6.5"><path d="M1.200 4.400C1.200 2 2.200 0.500 3.500 0.500S5.800 2 5.800 4.400z" fill="#9c9c9c"/><path d="M0.300 4.600h6.400M1.400 5.800h1.400M4.200 5.800h1.400" stroke="#9c9c9c" stroke-width="0.800"/></svg>
<div style="left:172.9px;top:432.36px;width:6px;height:6.4px;background:#191919;"></div>
<div style="left:180.7px;top:432.36px;width:6.2px;height:6.4px;background:#191919;"></div>
<svg style="left:180.8px;top:432.26px;" width="6" height="6.6" viewBox="0 0 6 6.6"><path d="M0.400 6.200L5.600 0.400" stroke="#e8e8e8" stroke-width="1"/></svg>
<span style="left:187.8px;top:429.26px;font-size:6.8px;font-style:italic;color:#c8c8c8;font-family:Liberation Serif,serif;letter-spacing:-0.300px;">fx</span>
<svg style="left:204.2px;top:432.06px;" width="7" height="7" viewBox="0 0 7 7"><g fill="none" stroke="#b8b8b8" stroke-width="0.800"><rect x="0.800" y="2.100" width="5.400" height="2.800" rx="1.400" transform="rotate(-45 3.500 3.500)"/><path d="M1.300 4.300L4.300 1.300M2.700 5.700L5.700 2.700"/></g></svg>
<div style="left:212.9px;top:432.36px;width:6px;height:6.4px;background:#191919;"></div>
<svg style="left:212.7px;top:432.36px;" width="6.5" height="6.5" viewBox="0 0 6.5 6.5"><circle cx="3.200" cy="3.200" r="2.700" fill="#d8d8d8"/><path d="M3.200 0.500a2.700 2.700 0 0 0 0 5.400a1.350 1.350 0 0 0 0-2.700a1.350 1.350 0 0 1 0-2.700z" fill="#191919"/></svg>
<div style="left:220.8px;top:432.36px;width:6px;height:6.4px;background:#191919;"></div>
<svg style="left:238.9px;top:432.06px;" width="7" height="7" viewBox="0 0 7 7"><path d="M3.500 3.500a0.900 0.900 0 1 1 0.900 0.900a1.900 1.900 0 1 1 1.900-1.900a2.900 2.900 0 1 1-2.900-2.200" fill="none" stroke="#a8a8a8" stroke-width="0.650"/></svg>
<div style="left:249.3px;top:432.16px;width:61.5px;height:6.8px;background:#111;border-radius:1.500px;"></div>
<span style="left:253.7px;top:430.16px;font-size:6.82px;color:#d8d8d8;transform:scaleX(0.8407);transform-origin:0 50%;">None</span>
<svg style="left:301.1px;top:433.46px;" width="6.4" height="4.8" viewBox="0 0 6.4 4.8"><path d="M0.600 0.800l2.600 2.600 2.600-2.600" stroke="#e8e8e8" stroke-width="1.250" fill="none"/></svg>
<div style="left:0px;top:440.49px;width:322.3px;height:8.25px;background:#303030;"></div>
<svg style="left:3.2px;top:442.14px;" width="7" height="5" viewBox="0 0 7 5"><path d="M0.300 2.500C1.300 1 2.300 0.400 3.500 0.400S5.700 1 6.700 2.500C5.700 4 4.700 4.600 3.500 4.600S1.300 4 0.300 2.500z" fill="#d8d8d8"/><circle cx="3.500" cy="2.500" r="1.100" fill="#1d1d1d"/></svg>
<div style="left:19.8px;top:441.34px;width:6.2px;height:6.6px;background:#191919;"></div>
<div style="left:27.8px;top:441.34px;width:6.2px;height:6.6px;background:#191919;"></div>
<svg style="left:39.5px;top:442.64px;" width="5" height="4" viewBox="0 0 5 4"><path d="M0.300 0.900l2.200 2.100 2.200-2.100" stroke="#d0d0d0" stroke-width="1.150" fill="none"/></svg>
<div style="left:46.3px;top:441.64px;width:6.5px;height:6px;background:#f36dd2;"></div>
<span style="left:57.4px;top:439.24px;font-size:6.71px;color:#c0c0c0;transform:scaleX(0.845);transform-origin:0 50%;">10</span>
<span style="left:74.3px;top:438.94px;font-size:7.4px;color:#c8c8c8;font-family:Liberation Serif,serif;">T</span>
<span style="left:83.2px;top:439.24px;font-size:6.82px;color:#dadada;transform:scaleX(0.8723);transform-origin:0 50%;">Animations</span>
<svg style="left:164.1px;top:441.44px;" width="7" height="6.5" viewBox="0 0 7 6.5"><path d="M1.200 4.400C1.200 2 2.200 0.500 3.500 0.500S5.800 2 5.800 4.400z" fill="#9c9c9c"/><path d="M0.300 4.600h6.400M1.400 5.800h1.400M4.200 5.800h1.400" stroke="#9c9c9c" stroke-width="0.800"/></svg>
<div style="left:172.9px;top:441.44px;width:6px;height:6.4px;background:#191919;"></div>
<svg style="left:172.9px;top:441.64px;" width="6" height="6" viewBox="0 0 6 6"><circle cx="3" cy="3" r="1.300" fill="none" stroke="#5a5a5a" stroke-width="0.600"/><path d="M3 0.500v0.900M3 4.600v0.900M0.500 3h0.900M4.600 3h0.900M1.200 1.200l.6.600M4.200 4.200l.6.600M4.800 1.200l-.6.600M1.800 4.200l-.6.600" stroke="#5a5a5a" stroke-width="0.500"/></svg>
<div style="left:180.7px;top:441.44px;width:6.2px;height:6.4px;background:#191919;"></div>
<svg style="left:180.8px;top:441.34px;" width="6" height="6.6" viewBox="0 0 6 6.6"><path d="M0.400 6.200L5.600 0.400" stroke="#e8e8e8" stroke-width="1"/></svg>
<span style="left:187.8px;top:438.34px;font-size:6.8px;font-style:italic;color:#c8c8c8;font-family:Liberation Serif,serif;letter-spacing:-0.300px;">fx</span>
<svg style="left:204.2px;top:441.14px;" width="7" height="7" viewBox="0 0 7 7"><g fill="none" stroke="#b8b8b8" stroke-width="0.800"><rect x="0.800" y="2.100" width="5.400" height="2.800" rx="1.400" transform="rotate(-45 3.500 3.500)"/><path d="M1.300 4.300L4.300 1.300M2.700 5.700L5.700 2.700"/></g></svg>
<div style="left:212.9px;top:441.44px;width:6px;height:6.4px;background:#191919;"></div>
<div style="left:220.8px;top:441.44px;width:6px;height:6.4px;background:#191919;"></div>
<svg style="left:238.9px;top:441.14px;" width="7" height="7" viewBox="0 0 7 7"><path d="M3.500 3.500a0.900 0.900 0 1 1 0.900 0.900a1.900 1.900 0 1 1 1.900-1.900a2.900 2.900 0 1 1-2.900-2.200" fill="none" stroke="#a8a8a8" stroke-width="0.650"/></svg>
<div style="left:249.3px;top:441.24px;width:61.5px;height:6.8px;background:#111;border-radius:1.500px;"></div>
<span style="left:253.7px;top:439.24px;font-size:6.82px;color:#d8d8d8;transform:scaleX(0.8407);transform-origin:0 50%;">None</span>
<svg style="left:301.1px;top:442.54px;" width="6.4" height="4.8" viewBox="0 0 6.4 4.8"><path d="M0.600 0.800l2.600 2.600 2.600-2.600" stroke="#e8e8e8" stroke-width="1.250" fill="none"/></svg>
<div style="left:0px;top:449.57px;width:322.3px;height:8.25px;background:#212121;"></div>
<svg style="left:3.2px;top:451.22px;" width="7" height="5" viewBox="0 0 7 5"><path d="M0.300 2.500C1.300 1 2.300 0.400 3.500 0.400S5.700 1 6.700 2.500C5.700 4 4.700 4.600 3.500 4.600S1.300 4 0.300 2.500z" fill="#d8d8d8"/><circle cx="3.500" cy="2.500" r="1.100" fill="#1d1d1d"/></svg>
<svg style="left:67.0px;top:451.72px;" width="5" height="4" viewBox="0 0 5 4"><path d="M0.300 0.900l2.200 2.100 2.200-2.100" stroke="#d0d0d0" stroke-width="1.150" fill="none"/></svg>
<span style="left:75.6px;top:448.32px;font-size:6.82px;color:#dadada;transform:scaleX(0.8169);transform-origin:0 50%;">Range Selector 1</span>
<div style="left:0px;top:458.65px;width:322.3px;height:8.25px;background:#212121;"></div>
<svg style="left:4.7px;top:460.3px;" width="4" height="5" viewBox="0 0 4 5"><path d="M3.600 0.300v4.400L0.500 2.500z" fill="#555"/></svg>
<svg style="left:11.8px;top:459.8px;" width="6" height="6" viewBox="0 0 6 6"><path d="M3 0.800L5.200 3 3 5.200 0.800 3z" fill="none" stroke="#8a8a8a" stroke-width="0.700"/><circle cx="3" cy="3" r="0.600" fill="#8a8a8a"/></svg>
<svg style="left:20.8px;top:460.3px;" width="4" height="5" viewBox="0 0 4 5"><path d="M0.400 0.300v4.400L3.500 2.500z" fill="#d0d0d0"/></svg>
<svg style="left:83.3px;top:458.8px;" width="7" height="8" viewBox="0 0 7 8"><circle cx="3.500" cy="4.500" r="2.700" fill="none" stroke="#3f8de8" stroke-width="0.900"/><path d="M3.500 4.500V2.600M2.600 0.700h1.800M3.500 0.700v1" stroke="#3f8de8" stroke-width="0.800"/></svg>
<svg style="left:92.7px;top:459.3px;" width="7" height="7" viewBox="0 0 7 7"><path d="M0.700 0.500v6h6" stroke="#8a8a8a" stroke-width="0.700" fill="none"/><path d="M1.600 5.400l1.600-2.400 1.400 1 1.800-2.400" stroke="#8a8a8a" stroke-width="0.600" fill="none"/></svg>
<span style="left:103.6px;top:457.4px;font-size:6.82px;color:#dadada;transform:scaleX(0.8083);transform-origin:0 50%;">Offset</span>
<span style="left:164.5px;top:457.4px;font-size:6.82px;color:#3f8de8;transform:scaleX(0.8374);transform-origin:0 50%;">-100<i style="font-style:normal;color:#b0b0b0">%</i></span>
<svg style="left:245.8px;top:459.3px;" width="7" height="7" viewBox="0 0 7 7"><path d="M3.500 3.500a0.900 0.900 0 1 1 0.900 0.900a1.900 1.900 0 1 1 1.900-1.900a2.900 2.900 0 1 1-2.900-2.200" fill="none" stroke="#a8a8a8" stroke-width="0.650"/></svg>
<div style="left:0px;top:467.73px;width:322.3px;height:8.25px;background:#303030;"></div>
<svg style="left:3.2px;top:469.38px;" width="7" height="5" viewBox="0 0 7 5"><path d="M0.300 2.500C1.300 1 2.300 0.400 3.500 0.400S5.700 1 6.700 2.500C5.700 4 4.700 4.600 3.500 4.600S1.300 4 0.300 2.500z" fill="#d8d8d8"/><circle cx="3.500" cy="2.500" r="1.100" fill="#1d1d1d"/></svg>
<div style="left:19.8px;top:468.58px;width:6.2px;height:6.6px;background:#191919;"></div>
<div style="left:27.8px;top:468.58px;width:6.2px;height:6.6px;background:#191919;"></div>
<svg style="left:39.5px;top:469.38px;" width="4" height="5" viewBox="0 0 4 5"><path d="M0.900 0.300l2.100 2.200-2.100 2.200" stroke="#d0d0d0" stroke-width="1.150" fill="none"/></svg>
<div style="left:46.3px;top:468.88px;width:6.5px;height:6px;background:#f36dd2;"></div>
<span style="left:57.4px;top:466.48px;font-size:6.71px;color:#c0c0c0;transform:scaleX(0.845);transform-origin:0 50%;">11</span>
<div style="left:73.6px;top:468.68px;width:6.5px;height:6.4px;background:#000;"></div>
<span style="left:83.2px;top:466.48px;font-size:6.82px;color:#dadada;transform:scaleX(0.8327);transform-origin:0 50%;">Black Solid 2</span>
<svg style="left:164.1px;top:468.68px;" width="7" height="6.5" viewBox="0 0 7 6.5"><path d="M1.200 4.400C1.200 2 2.200 0.500 3.500 0.500S5.800 2 5.800 4.400z" fill="#9c9c9c"/><path d="M0.300 4.600h6.400M1.400 5.800h1.400M4.200 5.800h1.400" stroke="#9c9c9c" stroke-width="0.800"/></svg>
<div style="left:172.9px;top:468.68px;width:6px;height:6.4px;background:#191919;"></div>
<div style="left:180.7px;top:468.68px;width:6.2px;height:6.4px;background:#191919;"></div>
<svg style="left:180.8px;top:468.58px;" width="6" height="6.6" viewBox="0 0 6 6.6"><path d="M0.400 6.200L5.600 0.400" stroke="#e8e8e8" stroke-width="1"/></svg>
<span style="left:187.8px;top:465.58px;font-size:6.8px;font-style:italic;color:#c8c8c8;font-family:Liberation Serif,serif;letter-spacing:-0.300px;">fx</span>
<svg style="left:204.2px;top:468.38px;" width="7" height="7" viewBox="0 0 7 7"><g fill="none" stroke="#b8b8b8" stroke-width="0.800"><rect x="0.800" y="2.100" width="5.400" height="2.800" rx="1.400" transform="rotate(-45 3.500 3.500)"/><path d="M1.300 4.300L4.300 1.300M2.700 5.700L5.700 2.700"/></g></svg>
<div style="left:212.9px;top:468.68px;width:6px;height:6.4px;background:#191919;"></div>
<div style="left:220.8px;top:468.68px;width:6px;height:6.4px;background:#191919;"></div>
<svg style="left:238.9px;top:468.38px;" width="7" height="7" viewBox="0 0 7 7"><path d="M3.500 3.500a0.900 0.900 0 1 1 0.900 0.900a1.900 1.900 0 1 1 1.900-1.900a2.900 2.900 0 1 1-2.900-2.200" fill="none" stroke="#a8a8a8" stroke-width="0.650"/></svg>
<div style="left:249.3px;top:468.48px;width:61.5px;height:6.8px;background:#111;border-radius:1.500px;"></div>
<span style="left:253.7px;top:466.48px;font-size:6.82px;color:#d8d8d8;transform:scaleX(0.8407);transform-origin:0 50%;">None</span>
<svg style="left:301.1px;top:469.78px;" width="6.4" height="4.8" viewBox="0 0 6.4 4.8"><path d="M0.600 0.800l2.600 2.600 2.600-2.600" stroke="#e8e8e8" stroke-width="1.250" fill="none"/></svg>
<div style="left:0px;top:476.81px;width:322.3px;height:8.25px;background:#303030;"></div>
<svg style="left:3.2px;top:478.46px;" width="7" height="5" viewBox="0 0 7 5"><path d="M0.300 2.500C1.300 1 2.300 0.400 3.500 0.400S5.700 1 6.700 2.500C5.700 4 4.700 4.600 3.500 4.600S1.300 4 0.300 2.500z" fill="#d8d8d8"/><circle cx="3.500" cy="2.500" r="1.100" fill="#1d1d1d"/></svg>
<div style="left:19.8px;top:477.66px;width:6.2px;height:6.6px;background:#191919;"></div>
<div style="left:27.8px;top:477.66px;width:6.2px;height:6.6px;background:#191919;"></div>
<svg style="left:39.5px;top:478.46px;" width="4" height="5" viewBox="0 0 4 5"><path d="M0.900 0.300l2.100 2.200-2.100 2.200" stroke="#d0d0d0" stroke-width="1.150" fill="none"/></svg>
<div style="left:46.3px;top:477.96px;width:6.5px;height:6px;background:#ea9312;"></div>
<span style="left:57.4px;top:475.56px;font-size:6.71px;color:#c0c0c0;transform:scaleX(0.845);transform-origin:0 50%;">12</span>
<div style="left:73.6px;top:477.76px;width:6.5px;height:6.4px;background:#fff;"></div>
<span style="left:83.2px;top:475.56px;font-size:6.82px;color:#dadada;transform:scaleX(0.8517);transform-origin:0 50%;">Adjustment Layer 1</span>
<svg style="left:164.1px;top:477.76px;" width="7" height="6.5" viewBox="0 0 7 6.5"><path d="M1.200 4.400C1.200 2 2.200 0.500 3.500 0.500S5.800 2 5.800 4.400z" fill="#9c9c9c"/><path d="M0.300 4.600h6.400M1.400 5.800h1.400M4.200 5.800h1.400" stroke="#9c9c9c" stroke-width="0.800"/></svg>
<div style="left:172.9px;top:477.76px;width:6px;height:6.4px;background:#191919;"></div>
<div style="left:180.7px;top:477.76px;width:6.2px;height:6.4px;background:#191919;"></div>
<svg style="left:180.8px;top:477.66px;" width="6" height="6.6" viewBox="0 0 6 6.6"><path d="M0.400 6.200L5.600 0.400" stroke="#e8e8e8" stroke-width="1"/></svg>
<span style="left:187.8px;top:474.65999999999997px;font-size:6.8px;font-style:italic;color:#c8c8c8;font-family:Liberation Serif,serif;letter-spacing:-0.300px;">fx</span>
<svg style="left:204.2px;top:477.46px;" width="7" height="7" viewBox="0 0 7 7"><g fill="none" stroke="#b8b8b8" stroke-width="0.800"><rect x="0.800" y="2.100" width="5.400" height="2.800" rx="1.400" transform="rotate(-45 3.500 3.500)"/><path d="M1.300 4.300L4.300 1.300M2.700 5.700L5.700 2.700"/></g></svg>
<div style="left:212.9px;top:477.76px;width:6px;height:6.4px;background:#191919;"></div>
<svg style="left:212.7px;top:477.76px;" width="6.5" height="6.5" viewBox="0 0 6.5 6.5"><circle cx="3.200" cy="3.200" r="2.700" fill="#d8d8d8"/><path d="M3.200 0.500a2.700 2.700 0 0 0 0 5.400a1.350 1.350 0 0 0 0-2.700a1.350 1.350 0 0 1 0-2.700z" fill="#191919"/></svg>
<div style="left:220.8px;top:477.76px;width:6px;height:6.4px;background:#191919;"></div>
<svg style="left:238.9px;top:477.46px;" width="7" height="7" viewBox="0 0 7 7"><path d="M3.500 3.500a0.900 0.900 0 1 1 0.900 0.900a1.900 1.900 0 1 1 1.900-1.900a2.900 2.900 0 1 1-2.900-2.200" fill="none" stroke="#a8a8a8" stroke-width="0.650"/></svg>
<div style="left:249.3px;top:477.56px;width:61.5px;height:6.8px;background:#111;border-radius:1.500px;"></div>
<span style="left:253.7px;top:475.56px;font-size:6.82px;color:#d8d8d8;transform:scaleX(0.8407);transform-origin:0 50%;">None</span>
<svg style="left:301.1px;top:478.86px;" width="6.4" height="4.8" viewBox="0 0 6.4 4.8"><path d="M0.600 0.800l2.600 2.600 2.600-2.600" stroke="#e8e8e8" stroke-width="1.250" fill="none"/></svg>
<div style="left:0px;top:485.89px;width:322.3px;height:8.25px;background:#393939;"></div>
<svg style="left:3.2px;top:487.54px;" width="7" height="5" viewBox="0 0 7 5"><path d="M0.300 2.500C1.300 1 2.300 0.400 3.500 0.400S5.700 1 6.700 2.500C5.700 4 4.700 4.600 3.500 4.600S1.300 4 0.300 2.500z" fill="#d8d8d8"/><circle cx="3.500" cy="2.500" r="1.100" fill="#1d1d1d"/></svg>
<div style="left:19.8px;top:486.74px;width:6.2px;height:6.6px;background:#191919;"></div>
<div style="left:27.8px;top:486.74px;width:6.2px;height:6.6px;background:#191919;"></div>
<svg style="left:39.5px;top:488.04px;" width="5" height="4" viewBox="0 0 5 4"><path d="M0.300 0.900l2.200 2.100 2.200-2.100" stroke="#d0d0d0" stroke-width="1.150" fill="none"/></svg>
<div style="left:46.3px;top:487.04px;width:6.5px;height:6px;background:#ea9312;"></div>
<span style="left:57.4px;top:484.64px;font-size:6.71px;color:#c0c0c0;transform:scaleX(0.845);transform-origin:0 50%;">13</span>
<span style="left:74.3px;top:484.34px;font-size:7.4px;color:#c8c8c8;font-family:Liberation Serif,serif;">T</span>
<span style="left:83.2px;top:484.64px;font-size:6.82px;color:#dadada;transform:scaleX(0.8715);transform-origin:0 50%;">Smooth Text</span>
<svg style="left:164.1px;top:486.84px;" width="7" height="6.5" viewBox="0 0 7 6.5"><path d="M1.200 4.400C1.200 2 2.200 0.500 3.500 0.500S5.800 2 5.800 4.400z" fill="#9c9c9c"/><path d="M0.300 4.600h6.400M1.400 5.800h1.400M4.200 5.800h1.400" stroke="#9c9c9c" stroke-width="0.800"/></svg>
<div style="left:172.9px;top:486.84px;width:6px;height:6.4px;background:#191919;"></div>
<svg style="left:172.9px;top:487.04px;" width="6" height="6" viewBox="0 0 6 6"><circle cx="3" cy="3" r="1.300" fill="none" stroke="#5a5a5a" stroke-width="0.600"/><path d="M3 0.500v0.900M3 4.600v0.900M0.500 3h0.900M4.600 3h0.900M1.200 1.200l.6.600M4.200 4.200l.6.600M4.800 1.200l-.6.600M1.800 4.200l-.6.600" stroke="#5a5a5a" stroke-width="0.500"/></svg>
<div style="left:180.7px;top:486.84px;width:6.2px;height:6.4px;background:#191919;"></div>
<svg style="left:180.8px;top:486.74px;" width="6" height="6.6" viewBox="0 0 6 6.6"><path d="M0.400 6.200L5.600 0.400" stroke="#e8e8e8" stroke-width="1"/></svg>
<span style="left:187.8px;top:483.73999999999995px;font-size:6.8px;font-style:italic;color:#c8c8c8;font-family:Liberation Serif,serif;letter-spacing:-0.300px;">fx</span>
<svg style="left:204.2px;top:486.54px;" width="7" height="7" viewBox="0 0 7 7"><g fill="none" stroke="#b8b8b8" stroke-width="0.800"><rect x="0.800" y="2.100" width="5.400" height="2.800" rx="1.400" transform="rotate(-45 3.500 3.500)"/><path d="M1.300 4.300L4.300 1.300M2.700 5.700L5.700 2.700"/></g></svg>
<div style="left:212.9px;top:486.84px;width:6px;height:6.4px;background:#191919;"></div>
<div style="left:220.8px;top:486.84px;width:6px;height:6.4px;background:#191919;"></div>
<svg style="left:238.9px;top:486.54px;" width="7" height="7" viewBox="0 0 7 7"><path d="M3.500 3.500a0.900 0.900 0 1 1 0.900 0.900a1.900 1.900 0 1 1 1.900-1.900a2.900 2.900 0 1 1-2.900-2.200" fill="none" stroke="#a8a8a8" stroke-width="0.650"/></svg>
<div style="left:249.3px;top:486.64px;width:61.5px;height:6.8px;background:#111;border-radius:1.500px;"></div>
<span style="left:253.7px;top:484.64px;font-size:6.82px;color:#d8d8d8;transform:scaleX(0.8407);transform-origin:0 50%;">None</span>
<svg style="left:301.1px;top:487.94px;" width="6.4" height="4.8" viewBox="0 0 6.4 4.8"><path d="M0.600 0.800l2.600 2.600 2.600-2.600" stroke="#e8e8e8" stroke-width="1.250" fill="none"/></svg>
<div style="left:0px;top:494.97px;width:322.3px;height:8.25px;background:#212121;"></div>
<svg style="left:3.2px;top:496.62px;" width="7" height="5" viewBox="0 0 7 5"><path d="M0.300 2.500C1.300 1 2.300 0.400 3.500 0.400S5.700 1 6.700 2.500C5.700 4 4.700 4.600 3.500 4.600S1.300 4 0.300 2.500z" fill="#d8d8d8"/><circle cx="3.500" cy="2.500" r="1.100" fill="#1d1d1d"/></svg>
<svg style="left:67.0px;top:497.12px;" width="5" height="4" viewBox="0 0 5 4"><path d="M0.300 0.900l2.200 2.100 2.200-2.100" stroke="#d0d0d0" stroke-width="1.150" fill="none"/></svg>
<span style="left:75.6px;top:493.72px;font-size:6.82px;color:#dadada;transform:scaleX(0.8169);transform-origin:0 50%;">Range Selector 1</span>
<div style="left:0px;top:504.05px;width:322.3px;height:8.25px;background:#212121;"></div>
<svg style="left:4.7px;top:505.7px;" width="4" height="5" viewBox="0 0 4 5"><path d="M3.600 0.300v4.400L0.500 2.500z" fill="#b8b8b8"/></svg>
<svg style="left:11.8px;top:505.2px;" width="6" height="6" viewBox="0 0 6 6"><path d="M3 0.800L5.200 3 3 5.200 0.800 3z" fill="none" stroke="#8a8a8a" stroke-width="0.700"/><circle cx="3" cy="3" r="0.600" fill="#8a8a8a"/></svg>
<svg style="left:20.8px;top:505.7px;" width="4" height="5" viewBox="0 0 4 5"><path d="M0.400 0.300v4.400L3.500 2.500z" fill="#d0d0d0"/></svg>
<svg style="left:83.3px;top:504.2px;" width="7" height="8" viewBox="0 0 7 8"><circle cx="3.500" cy="4.500" r="2.700" fill="none" stroke="#3f8de8" stroke-width="0.900"/><path d="M3.500 4.500V2.600M2.600 0.700h1.800M3.500 0.700v1" stroke="#3f8de8" stroke-width="0.800"/></svg>
<svg style="left:92.7px;top:504.7px;" width="7" height="7" viewBox="0 0 7 7"><path d="M0.700 0.500v6h6" stroke="#8a8a8a" stroke-width="0.700" fill="none"/><path d="M1.600 5.400l1.600-2.400 1.400 1 1.800-2.400" stroke="#8a8a8a" stroke-width="0.600" fill="none"/></svg>
<span style="left:103.6px;top:502.8px;font-size:6.82px;color:#dadada;transform:scaleX(0.8083);transform-origin:0 50%;">Offset</span>
<span style="left:164.5px;top:502.8px;font-size:6.82px;color:#3f8de8;transform:scaleX(0.8825);transform-origin:0 50%;">-1<i style="font-style:normal;color:#b0b0b0">%</i></span>
<svg style="left:245.8px;top:504.7px;" width="7" height="7" viewBox="0 0 7 7"><path d="M3.500 3.500a0.900 0.900 0 1 1 0.900 0.900a1.900 1.900 0 1 1 1.900-1.900a2.900 2.900 0 1 1-2.900-2.200" fill="none" stroke="#a8a8a8" stroke-width="0.650"/></svg>
<div style="left:0px;top:513.13px;width:322.3px;height:8.25px;background:#3a3a3a;"></div>
<svg style="left:3.2px;top:514.78px;" width="7" height="5" viewBox="0 0 7 5"><path d="M0.300 2.500C1.300 1 2.300 0.400 3.500 0.400S5.700 1 6.700 2.500C5.700 4 4.700 4.600 3.500 4.600S1.300 4 0.300 2.500z" fill="#d8d8d8"/><circle cx="3.500" cy="2.500" r="1.100" fill="#1d1d1d"/></svg>
<div style="left:19.8px;top:513.98px;width:6.2px;height:6.6px;background:#191919;"></div>
<div style="left:27.8px;top:513.98px;width:6.2px;height:6.6px;background:#191919;"></div>
<svg style="left:39.5px;top:515.28px;" width="5" height="4" viewBox="0 0 5 4"><path d="M0.300 0.900l2.200 2.100 2.200-2.100" stroke="#d0d0d0" stroke-width="1.150" fill="none"/></svg>
<div style="left:46.3px;top:514.28px;width:6.5px;height:6px;background:#ea9312;"></div>
<span style="left:57.4px;top:511.88px;font-size:6.71px;color:#c0c0c0;transform:scaleX(0.845);transform-origin:0 50%;">14</span>
<svg style="left:73.2px;top:513.68px;" width="7.5" height="7.2" viewBox="0 0 7.5 7.2"><path d="M3.750 0.300l1.050 2.300 2.500.280-1.850 1.720.5 2.480L3.750 5.850 1.550 7.080l.5-2.480L.2 2.880l2.500-.280z" fill="#c8c8c8"/></svg>
<span style="left:83.2px;top:511.88px;font-size:6.82px;color:#dadada;transform:scaleX(0.8144);transform-origin:0 50%;">Shape Layer 1</span>
<svg style="left:164.1px;top:514.08px;" width="7" height="6.5" viewBox="0 0 7 6.5"><path d="M1.200 4.400C1.200 2 2.200 0.500 3.500 0.500S5.800 2 5.800 4.400z" fill="#9c9c9c"/><path d="M0.300 4.600h6.400M1.400 5.800h1.400M4.200 5.800h1.400" stroke="#9c9c9c" stroke-width="0.800"/></svg>
<div style="left:172.9px;top:514.08px;width:6px;height:6.4px;background:#191919;"></div>
<svg style="left:172.9px;top:514.28px;" width="6" height="6" viewBox="0 0 6 6"><circle cx="3" cy="3" r="1.300" fill="none" stroke="#5a5a5a" stroke-width="0.600"/><path d="M3 0.500v0.900M3 4.600v0.900M0.500 3h0.900M4.600 3h0.900M1.200 1.200l.6.600M4.200 4.200l.6.600M4.800 1.200l-.6.600M1.800 4.200l-.6.600" stroke="#5a5a5a" stroke-width="0.500"/></svg>
<div style="left:180.7px;top:514.08px;width:6.2px;height:6.4px;background:#191919;"></div>
<svg style="left:180.8px;top:513.98px;" width="6" height="6.6" viewBox="0 0 6 6.6"><path d="M0.400 6.200L5.600 0.400" stroke="#e8e8e8" stroke-width="1"/></svg>
<span style="left:187.8px;top:510.97999999999996px;font-size:6.8px;font-style:italic;color:#c8c8c8;font-family:Liberation Serif,serif;letter-spacing:-0.300px;">fx</span>
<svg style="left:204.2px;top:513.78px;" width="7" height="7" viewBox="0 0 7 7"><g fill="none" stroke="#b8b8b8" stroke-width="0.800"><rect x="0.800" y="2.100" width="5.400" height="2.800" rx="1.400" transform="rotate(-45 3.500 3.500)"/><path d="M1.300 4.300L4.300 1.300M2.700 5.700L5.700 2.700"/></g></svg>
<div style="left:212.9px;top:514.08px;width:6px;height:6.4px;background:#191919;"></div>
<div style="left:220.8px;top:514.08px;width:6px;height:6.4px;background:#191919;"></div>
<svg style="left:238.9px;top:513.78px;" width="7" height="7" viewBox="0 0 7 7"><path d="M3.500 3.500a0.900 0.900 0 1 1 0.900 0.900a1.900 1.900 0 1 1 1.900-1.900a2.900 2.900 0 1 1-2.900-2.200" fill="none" stroke="#a8a8a8" stroke-width="0.650"/></svg>
<div style="left:249.3px;top:513.88px;width:61.5px;height:6.8px;background:#111;border-radius:1.500px;"></div>
<span style="left:253.7px;top:511.88px;font-size:6.82px;color:#d8d8d8;transform:scaleX(0.8407);transform-origin:0 50%;">None</span>
<svg style="left:301.1px;top:515.18px;" width="6.4" height="4.8" viewBox="0 0 6.4 4.8"><path d="M0.600 0.800l2.600 2.600 2.600-2.600" stroke="#e8e8e8" stroke-width="1.250" fill="none"/></svg>
<div style="left:0px;top:522.21px;width:322.3px;height:8.25px;background:#212121;"></div>
<svg style="left:4.7px;top:523.86px;" width="4" height="5" viewBox="0 0 4 5"><path d="M3.600 0.300v4.400L0.500 2.500z" fill="#b8b8b8"/></svg>
<svg style="left:11.8px;top:523.36px;" width="6" height="6" viewBox="0 0 6 6"><path d="M3 0.800L5.200 3 3 5.200 0.800 3z" fill="none" stroke="#8a8a8a" stroke-width="0.700"/><circle cx="3" cy="3" r="0.600" fill="#8a8a8a"/></svg>
<svg style="left:20.8px;top:523.86px;" width="4" height="5" viewBox="0 0 4 5"><path d="M0.400 0.300v4.400L3.500 2.500z" fill="#d0d0d0"/></svg>
<svg style="left:74.4px;top:522.36px;" width="7" height="8" viewBox="0 0 7 8"><circle cx="3.500" cy="4.500" r="2.700" fill="none" stroke="#3f8de8" stroke-width="0.900"/><path d="M3.500 4.500V2.600M2.600 0.700h1.800M3.500 0.700v1" stroke="#3f8de8" stroke-width="0.800"/></svg>
<svg style="left:83.8px;top:522.86px;" width="7" height="7" viewBox="0 0 7 7"><path d="M0.700 0.500v6h6" stroke="#8a8a8a" stroke-width="0.700" fill="none"/><path d="M1.600 5.400l1.600-2.400 1.400 1 1.800-2.400" stroke="#8a8a8a" stroke-width="0.600" fill="none"/></svg>
<span style="left:94.7px;top:520.96px;font-size:6.82px;color:#dadada;transform:scaleX(0.8165);transform-origin:0 50%;">End</span>
<span style="left:164.5px;top:520.96px;font-size:6.82px;color:#3f8de8;transform:scaleX(0.8175);transform-origin:0 50%;">55,9<i style="font-style:normal;color:#b0b0b0">%</i></span>
<svg style="left:245.8px;top:522.86px;" width="7" height="7" viewBox="0 0 7 7"><path d="M3.500 3.500a0.900 0.900 0 1 1 0.900 0.900a1.900 1.900 0 1 1 1.900-1.900a2.900 2.900 0 1 1-2.900-2.200" fill="none" stroke="#a8a8a8" stroke-width="0.650"/></svg>
<div style="left:0px;top:531.29px;width:322.3px;height:8.25px;background:#303030;"></div>
<svg style="left:3.2px;top:532.94px;" width="7" height="5" viewBox="0 0 7 5"><path d="M0.300 2.500C1.300 1 2.300 0.400 3.500 0.400S5.700 1 6.700 2.500C5.700 4 4.700 4.600 3.500 4.600S1.300 4 0.300 2.500z" fill="#d8d8d8"/><circle cx="3.500" cy="2.500" r="1.100" fill="#1d1d1d"/></svg>
<div style="left:19.8px;top:532.14px;width:6.2px;height:6.6px;background:#191919;"></div>
<div style="left:27.8px;top:532.14px;width:6.2px;height:6.6px;background:#191919;"></div>
<svg style="left:39.5px;top:532.94px;" width="4" height="5" viewBox="0 0 4 5"><path d="M0.900 0.300l2.100 2.200-2.100 2.200" stroke="#d0d0d0" stroke-width="1.150" fill="none"/></svg>
<div style="left:46.3px;top:532.44px;width:6.5px;height:6px;background:#ea9312;"></div>
<span style="left:57.4px;top:530.04px;font-size:6.71px;color:#c0c0c0;transform:scaleX(0.845);transform-origin:0 50%;">15</span>
<div style="left:73.6px;top:532.24px;width:6.5px;height:6.4px;background:#fff;"></div>
<span style="left:83.2px;top:530.04px;font-size:6.82px;color:#dadada;transform:scaleX(0.8495);transform-origin:0 50%;">White Solid 1</span>
<svg style="left:164.1px;top:532.24px;" width="7" height="6.5" viewBox="0 0 7 6.5"><path d="M1.200 4.400C1.200 2 2.200 0.500 3.500 0.500S5.800 2 5.800 4.400z" fill="#9c9c9c"/><path d="M0.300 4.600h6.400M1.400 5.800h1.400M4.200 5.800h1.400" stroke="#9c9c9c" stroke-width="0.800"/></svg>
<div style="left:172.9px;top:532.24px;width:6px;height:6.4px;background:#191919;"></div>
<div style="left:180.7px;top:532.24px;width:6.2px;height:6.4px;background:#191919;"></div>
<svg style="left:180.8px;top:532.14px;" width="6" height="6.6" viewBox="0 0 6 6.6"><path d="M0.400 6.200L5.600 0.400" stroke="#e8e8e8" stroke-width="1"/></svg>
<svg style="left:204.2px;top:531.94px;" width="7" height="7" viewBox="0 0 7 7"><g fill="none" stroke="#b8b8b8" stroke-width="0.800"><rect x="0.800" y="2.100" width="5.400" height="2.800" rx="1.400" transform="rotate(-45 3.500 3.500)"/><path d="M1.300 4.300L4.300 1.300M2.700 5.700L5.700 2.700"/></g></svg>
<div style="left:212.9px;top:532.24px;width:6px;height:6.4px;background:#191919;"></div>
<div style="left:220.8px;top:532.24px;width:6px;height:6.4px;background:#191919;"></div>
<svg style="left:238.9px;top:531.94px;" width="7" height="7" viewBox="0 0 7 7"><path d="M3.500 3.500a0.900 0.900 0 1 1 0.900 0.900a1.900 1.900 0 1 1 1.900-1.900a2.900 2.900 0 1 1-2.900-2.200" fill="none" stroke="#a8a8a8" stroke-width="0.650"/></svg>
<div style="left:249.3px;top:532.04px;width:61.5px;height:6.8px;background:#111;border-radius:1.500px;"></div>
<span style="left:253.7px;top:530.04px;font-size:6.82px;color:#d8d8d8;transform:scaleX(0.8407);transform-origin:0 50%;">None</span>
<svg style="left:301.1px;top:533.34px;" width="6.4" height="4.8" viewBox="0 0 6.4 4.8"><path d="M0.600 0.800l2.600 2.600 2.600-2.600" stroke="#e8e8e8" stroke-width="1.250" fill="none"/></svg>
<div style="left:0px;top:539.4px;width:1022.3px;height:10.6px;background:#1d1d1d;"></div>
<svg style="left:3.4px;top:541.4px;" width="7" height="7" viewBox="0 0 7 7"><rect x="0.400" y="0.400" width="6.200" height="6.200" rx="1.200" fill="#4a4a4a"/><circle cx="2.800" cy="2.800" r="1.500" fill="none" stroke="#b8b8b8" stroke-width="0.600"/><rect x="3" y="3" width="2.800" height="2.800" fill="#b8b8b8"/></svg>
<svg style="left:13.2px;top:541.4px;" width="7" height="7" viewBox="0 0 7 7"><circle cx="2.800" cy="2.800" r="1.900" fill="none" stroke="#b8b8b8" stroke-width="0.700"/><circle cx="4.400" cy="4.400" r="1.900" fill="none" stroke="#b8b8b8" stroke-width="0.700"/></svg>
<span style="left:23.5px;top:539.0px;font-size:6.6px;color:#b8b8b8;transform:scaleX(0.845);transform-origin:0 50%;letter-spacing:0.400px;font-weight:bold;">{}</span>
<svg style="left:33.8px;top:541.4px;" width="8" height="7" viewBox="0 0 8 7"><circle cx="2.200" cy="2" r="1.200" fill="#b8b8b8"/><path d="M0.400 6.400c0-1.800.8-2.600 1.800-2.600s1.800.8 1.800 2.600z" fill="#b8b8b8"/><path d="M4.600 1.600h3v3.800h-3z" fill="#b8b8b8"/></svg>
<span style="left:56px;top:538.9px;font-size:5.8px;color:#c4c4c4;transform:scaleX(0.9877);transform-origin:0 50%;">Frame Render Time:</span>
<span style="left:110.8px;top:538.9px;font-size:5.8px;color:#2fd0a8;transform:scaleX(0.9647);transform-origin:0 50%;font-weight:bold;">0ms</span>
<span style="left:167.2px;top:538.9px;font-size:5.8px;color:#c4c4c4;transform:scaleX(1.0027);transform-origin:0 50%;">Toggle Switches / Modes</span>
<div style="left:322.5px;top:380px;width:0.8px;height:160px;background:#0c0c0c;"></div>
<div style="left:326.4px;top:382.1px;width:683.9px;height:4.2px;background:#717171;"></div>
<svg style="left:323.6px;top:382.1px;" width="3" height="4.2" viewBox="0 0 3 4.2"><path d="M3 0v4.200H2.200A2.100 2.100 0 0 1 2.200 0z" fill="#3f8de8"/></svg>
<svg style="left:1010.3px;top:382.1px;" width="4" height="4.2" viewBox="0 0 4 4.2"><path d="M0 0v4.200H1.200A2.300 2.100 0 0 0 1.200 0z" fill="#3f8de8"/></svg>
<div style="left:326.05px;top:392.6px;width:0.7px;height:4.6px;background:#a8a8a8;"></div>
<span style="left:323.0px;top:385px;font-size:5.7px;color:#d0d0d0;transform:scaleX(0.9956);transform-origin:0 50%;-webkit-text-stroke:0;">0:00f</span>
<div style="left:369.35px;top:394.6px;width:0.7px;height:2.6px;background:#a8a8a8;"></div>
<span style="left:269.7px;width:200px;text-align:center;top:385px;font-size:5.7px;color:#d0d0d0;transform:scaleX(0.9603);-webkit-text-stroke:0;">00:30f</span>
<div style="left:412.65px;top:392.6px;width:0.7px;height:4.6px;background:#a8a8a8;"></div>
<span style="left:313.0px;width:200px;text-align:center;top:385px;font-size:5.7px;color:#d0d0d0;transform:scaleX(0.9603);-webkit-text-stroke:0;">01:00f</span>
<div style="left:455.95px;top:394.6px;width:0.7px;height:2.6px;background:#a8a8a8;"></div>
<span style="left:356.3px;width:200px;text-align:center;top:385px;font-size:5.7px;color:#d0d0d0;transform:scaleX(0.9603);-webkit-text-stroke:0;">01:30f</span>
<div style="left:499.25px;top:392.6px;width:0.7px;height:4.6px;background:#a8a8a8;"></div>
<span style="left:399.6px;width:200px;text-align:center;top:385px;font-size:5.7px;color:#d0d0d0;transform:scaleX(0.9603);-webkit-text-stroke:0;">02:00f</span>
<div style="left:542.55px;top:394.6px;width:0.7px;height:2.6px;background:#a8a8a8;"></div>
<span style="left:442.9px;width:200px;text-align:center;top:385px;font-size:5.7px;color:#d0d0d0;transform:scaleX(0.9603);-webkit-text-stroke:0;">02:30f</span>
<div style="left:585.85px;top:392.6px;width:0.7px;height:4.6px;background:#a8a8a8;"></div>
<span style="left:486.2px;width:200px;text-align:center;top:385px;font-size:5.7px;color:#d0d0d0;transform:scaleX(0.9603);-webkit-text-stroke:0;">03:00f</span>
<div style="left:629.15px;top:394.6px;width:0.7px;height:2.6px;background:#a8a8a8;"></div>
<span style="left:529.5px;width:200px;text-align:center;top:385px;font-size:5.7px;color:#d0d0d0;transform:scaleX(0.9603);-webkit-text-stroke:0;">03:30f</span>
<div style="left:672.45px;top:392.6px;width:0.7px;height:4.6px;background:#a8a8a8;"></div>
<span style="left:572.8px;width:200px;text-align:center;top:385px;font-size:5.7px;color:#d0d0d0;transform:scaleX(0.9603);-webkit-text-stroke:0;">04:00f</span>
<div style="left:715.75px;top:394.6px;width:0.7px;height:2.6px;background:#a8a8a8;"></div>
<span style="left:616.1px;width:200px;text-align:center;top:385px;font-size:5.7px;color:#d0d0d0;transform:scaleX(0.9603);-webkit-text-stroke:0;">04:30f</span>
<div style="left:759.05px;top:392.6px;width:0.7px;height:4.6px;background:#a8a8a8;"></div>
<span style="left:659.4px;width:200px;text-align:center;top:385px;font-size:5.7px;color:#d0d0d0;transform:scaleX(0.9603);-webkit-text-stroke:0;">05:00f</span>
<div style="left:802.35px;top:394.6px;width:0.7px;height:2.6px;background:#a8a8a8;"></div>
<span style="left:702.7px;width:200px;text-align:center;top:385px;font-size:5.7px;color:#d0d0d0;transform:scaleX(0.9603);-webkit-text-stroke:0;">05:30f</span>
<div style="left:845.65px;top:392.6px;width:0.7px;height:4.6px;background:#a8a8a8;"></div>
<span style="left:746.0px;width:200px;text-align:center;top:385px;font-size:5.7px;color:#d0d0d0;transform:scaleX(0.9603);-webkit-text-stroke:0;">06:00f</span>
<div style="left:888.95px;top:394.6px;width:0.7px;height:2.6px;background:#a8a8a8;"></div>
<span style="left:789.3px;width:200px;text-align:center;top:385px;font-size:5.7px;color:#d0d0d0;transform:scaleX(0.9603);-webkit-text-stroke:0;">06:30f</span>
<div style="left:932.25px;top:392.6px;width:0.7px;height:4.6px;background:#a8a8a8;"></div>
<span style="left:832.6px;width:200px;text-align:center;top:385px;font-size:5.7px;color:#d0d0d0;transform:scaleX(0.9603);-webkit-text-stroke:0;">07:00f</span>
<div style="left:975.55px;top:394.6px;width:0.7px;height:2.6px;background:#a8a8a8;"></div>
<span style="left:875.9px;width:200px;text-align:center;top:385px;font-size:5.7px;color:#d0d0d0;transform:scaleX(0.9603);-webkit-text-stroke:0;">07:30f</span>
<div style="left:1008px;top:385px;width:5.800px;height:12px;overflow:hidden;">
<span style="left:2.7px;top:0px;font-size:5.7px;color:#d0d0d0;transform:scaleX(0.9603);transform-origin:0 50%;-webkit-text-stroke:0;">08:00f</span>
</div>
<div style="left:326.4px;top:397.7px;width:683.9px;height:7.5px;background:#6b6b6b;"></div>
<svg style="left:323.4px;top:397.8px;" width="3.2" height="7.5" viewBox="0 0 3.2 7.5"><path d="M3.200 0v7.500H1.800A1.800 1.800 0 0 1 0 5.700V1.800A1.800 1.800 0 0 1 1.800 0z" fill="#3f8de8"/></svg>
<svg style="left:1010.3px;top:397.8px;" width="3.6" height="7.5" viewBox="0 0 3.6 7.5"><path d="M0 0v7.500H1.600A1.800 1.800 0 0 0 3.400 5.700V1.800A1.800 1.800 0 0 0 1.600 0z" fill="#3f8de8"/></svg>
<div style="left:326.4px;top:405.6px;width:683.9px;height:2.4px;background:#0fa60f;"></div>
<svg style="left:1015.8px;top:399px;" width="7" height="8" viewBox="0 0 7 8"><path d="M0.400 0.300h6v4.400l-3 2.800-3-2.800z" fill="#c0c0c0"/></svg>
<svg style="left:1014.8px;top:409.5px;" width="9" height="8" viewBox="0 0 9 8"><path d="M0.600 4L4 0.800 5.200 2 3.400 4l1.800 2L4 7.200z" fill="none" stroke="#c8c8c8" stroke-width="0.700"/><rect x="4.600" y="2.200" width="3.800" height="3.600" fill="#c8c8c8"/></svg>
<div style="left:323.3px;top:408px;width:690.7px;height:131.4px;background:#1a1a1a;"></div>
<div style="left:323.3px;top:408px;width:690.7px;height:4.37px;background:#262626;"></div>
<div style="left:323.3px;top:413.3px;width:3.1px;height:8.15px;background:#242424;"></div>
<div style="left:326.4px;top:413.3px;width:687.6px;height:8.15px;background:#282828;"></div>
<div style="left:323.3px;top:422.38px;width:3.1px;height:8.15px;background:#2f2f2f;"></div>
<div style="left:326.4px;top:422.38px;width:687.6px;height:8.15px;background:#363636;"></div>
<div style="left:323.3px;top:431.46px;width:3.1px;height:8.15px;background:#2f2f2f;"></div>
<div style="left:326.4px;top:431.46px;width:687.6px;height:8.15px;background:#363636;"></div>
<div style="left:323.3px;top:440.54px;width:3.1px;height:8.15px;background:#2f2f2f;"></div>
<div style="left:326.4px;top:440.54px;width:687.6px;height:8.15px;background:#363636;"></div>
<div style="left:323.3px;top:449.62px;width:3.1px;height:8.15px;background:#242424;"></div>
<div style="left:326.4px;top:449.62px;width:687.6px;height:8.15px;background:#282828;"></div>
<div style="left:323.3px;top:458.7px;width:3.1px;height:8.15px;background:#242424;"></div>
<div style="left:326.4px;top:458.7px;width:687.6px;height:8.15px;background:#282828;"></div>
<div style="left:323.3px;top:467.78px;width:3.1px;height:8.15px;background:#2f2f2f;"></div>
<div style="left:326.4px;top:467.78px;width:687.6px;height:8.15px;background:#363636;"></div>
<div style="left:323.3px;top:476.86px;width:3.1px;height:8.15px;background:#2f2f2f;"></div>
<div style="left:326.4px;top:476.86px;width:687.6px;height:8.15px;background:#363636;"></div>
<div style="left:323.3px;top:485.94px;width:3.1px;height:8.15px;background:#2f2f2f;"></div>
<div style="left:326.4px;top:485.94px;width:687.6px;height:8.15px;background:#363636;"></div>
<div style="left:323.3px;top:495.02px;width:3.1px;height:8.15px;background:#242424;"></div>
<div style="left:326.4px;top:495.02px;width:687.6px;height:8.15px;background:#282828;"></div>
<div style="left:323.3px;top:504.1px;width:3.1px;height:8.15px;background:#242424;"></div>
<div style="left:326.4px;top:504.1px;width:687.6px;height:8.15px;background:#282828;"></div>
<div style="left:323.3px;top:513.18px;width:3.1px;height:8.15px;background:#2f2f2f;"></div>
<div style="left:326.4px;top:513.18px;width:687.6px;height:8.15px;background:#363636;"></div>
<div style="left:323.3px;top:522.26px;width:3.1px;height:8.15px;background:#242424;"></div>
<div style="left:326.4px;top:522.26px;width:687.6px;height:8.15px;background:#282828;"></div>
<div style="left:323.3px;top:531.34px;width:3.1px;height:8.15px;background:#2f2f2f;"></div>
<div style="left:326.4px;top:531.34px;width:687.6px;height:8.15px;background:#363636;"></div>
<div style="left:493.5px;top:422.38px;width:183.0px;height:8.15px;background:#3d7374;"></div>
<div style="left:418.7px;top:431.46px;width:83.5px;height:8.15px;background:#9a5488;"></div>
<div style="left:418.7px;top:440.54px;width:83.5px;height:8.15px;background:#9a5488;"></div>
<div style="left:418.7px;top:467.78px;width:83.5px;height:8.15px;background:#9a5488;"></div>
<div style="left:326.4px;top:476.86px;width:114.2px;height:8.15px;background:#93681f;"></div>
<div style="left:326.4px;top:485.94px;width:114.2px;height:8.15px;background:#93681f;"></div>
<div style="left:326.4px;top:513.18px;width:114.2px;height:8.15px;background:#93681f;"></div>
<div style="left:326.4px;top:531.34px;width:114.2px;height:8.15px;background:#93681f;"></div>
<svg style="left:590.5px;top:414.6px;" width="4" height="5.6" viewBox="0 0 4 5.6"><path d="M0.200 0.200h3.600v0.900L2.600 2.800l1.200 1.700v0.900H0.200v-0.900L1.400 2.800 0.200 1.100z" fill="#d4d4d4"/></svg>
<svg style="left:590.0px;top:408.6px;" width="5" height="3" viewBox="0 0 5 3"><path d="M0.300 2.800L2.500 0.400l2.200 2.400z" fill="#c8c8c8"/></svg>
<svg style="left:672.2px;top:414.6px;" width="4" height="5.6" viewBox="0 0 4 5.6"><path d="M0.200 0.200h3.600v0.900L2.600 2.800l1.200 1.700v0.900H0.200v-0.900L1.400 2.800 0.200 1.100z" fill="#d4d4d4"/></svg>
<svg style="left:671.7px;top:408.6px;" width="5" height="3" viewBox="0 0 5 3"><path d="M0.300 2.800L2.500 0.400l2.200 2.400z" fill="#c8c8c8"/></svg>
<svg style="left:372.1px;top:450.92px;" width="4" height="5.6" viewBox="0 0 4 5.6"><path d="M0.200 0.200h3.600v0.900L2.600 2.800l1.200 1.700v0.900H0.200v-0.900L1.400 2.800 0.200 1.100z" fill="#d4d4d4"/></svg>
<svg style="left:388.8px;top:460.0px;" width="5.6" height="5.6" viewBox="0 0 5.6 5.6"><path d="M2.800 0.200L5.400 2.800 2.800 5.400 0.200 2.800z" fill="#8a8a8a"/><path d="M2.800 0.200L5.400 2.800 2.800 5.400z" fill="#d8d8d8"/></svg>
<svg style="left:524.0px;top:460.0px;" width="5.6" height="5.6" viewBox="0 0 5.6 5.6"><path d="M2.800 0.200L5.400 2.800 2.800 5.400 0.200 2.800z" fill="#8a8a8a"/><path d="M2.800 0.200L5.400 2.800 2.800 5.400z" fill="#d8d8d8"/></svg>
<svg style="left:372.1px;top:496.32px;" width="4" height="5.6" viewBox="0 0 4 5.6"><path d="M0.200 0.200h3.600v0.900L2.600 2.800l1.200 1.700v0.900H0.200v-0.900L1.400 2.800 0.200 1.100z" fill="#d4d4d4"/></svg>
<svg style="left:323.8px;top:505.4px;" width="5.6" height="5.6" viewBox="0 0 5.6 5.6"><path d="M2.800 0.200L5.400 2.800 2.800 5.400 0.200 2.800z" fill="#8a8a8a"/><path d="M2.800 0.200L5.400 2.800 2.800 5.400z" fill="#d8d8d8"/></svg>
<svg style="left:420.2px;top:505.4px;" width="5.6" height="5.6" viewBox="0 0 5.6 5.6"><path d="M2.800 0.200L5.400 2.800 2.800 5.400 0.200 2.800z" fill="#8a8a8a"/><path d="M2.800 0.200L5.400 2.800 2.800 5.400z" fill="#d8d8d8"/></svg>
<svg style="left:356.4px;top:523.56px;" width="4" height="5.6" viewBox="0 0 4 5.6"><path d="M0.200 0.200h3.600v0.900L2.600 2.800l1.200 1.700v0.900H0.200v-0.900L1.400 2.800 0.200 1.100z" fill="#d4d4d4"/></svg>
<svg style="left:431.2px;top:523.56px;" width="4" height="5.6" viewBox="0 0 4 5.6"><path d="M0.200 0.200h3.600v0.900L2.600 2.800l1.200 1.700v0.900H0.200v-0.900L1.400 2.800 0.200 1.100z" fill="#d4d4d4"/></svg>
<div style="left:373.6px;top:386px;width:1.1px;height:154px;background:#4a8bd4;"></div>
<svg style="left:371px;top:389.8px;" width="6.4" height="6.6" viewBox="0 0 6.4 6.6"><path d="M0.200 0.200h6v3.200L3.200 6.300 0.200 3.400z" fill="#3f8de8"/></svg>
<div style="left:373.7px;top:382.1px;width:0.9px;height:4.2px;background:#3f8de8;"></div>
<svg style="left:324px;top:541.5px;" width="52" height="7" viewBox="0 0 52 7"><path d="M1.600 5l1.600-2.400 1 1.200.8-.8L6.600 5z" fill="#b8b8b8"/><circle cx="13.500" cy="3.300" r="2" fill="none" stroke="#c8c8c8" stroke-width="0.900"/><path d="M16 3.500h26" stroke="#4a4a4a" stroke-width="0.700"/><path d="M43.500 5.600l2.400-4 1.600 2 1-1.200 2.400 3.200z" fill="#c0c0c0"/></svg>
<div style="left:1014.4px;top:419px;width:8px;height:120.5px;background:#1a1a1a;"></div>
<div style="left:1014.6px;top:481px;width:7.6px;height:58.5px;background:#4c4c4c;"></div>
<div style="left:1022.3px;top:365.7px;width:1.7px;height:184.3px;background:#030303;"></div>
</div></body></html>
